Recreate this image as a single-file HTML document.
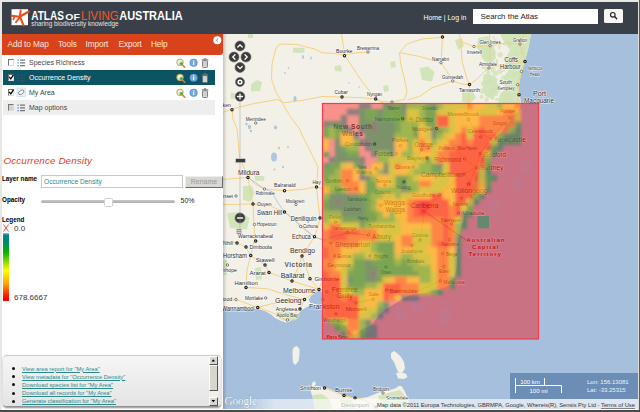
<!DOCTYPE html>
<html><head><meta charset="utf-8"><title>Atlas of Living Australia - Spatial Portal</title>
<style>
html,body{margin:0;padding:0;}
body{width:640px;height:412px;overflow:hidden;position:relative;background:#fff;font-family:"Liberation Sans",Arial,sans-serif;font-size:8px;color:#222;}
.abs{position:absolute;}
#hdr{left:2px;top:2px;width:636px;height:32px;background:#394049;}
#menu{left:2px;top:34px;width:221px;height:21px;background:#d9431b;border-radius:0 0 3px 0;}
#menu span{position:absolute;top:4.6px;color:#fbe4dc;font-size:8.3px;white-space:nowrap;letter-spacing:-0.12px}
.row{left:3px;width:212px;height:15px;}
.row .cb{position:absolute;left:4.5px;top:4px;width:4.8px;height:4.8px;border:1px solid #777;border-right-color:#ddd;border-bottom-color:#ddd;background:#fff;}
.row .tx{position:absolute;left:26px;top:3.5px;font-size:7px;color:#444;white-space:nowrap}
.lbl{font-weight:bold;font-size:6.3px;color:#000;white-space:nowrap}
a{color:#2b8a8c;text-decoration:underline}
#links div{position:absolute;left:22px;font-size:5.8px;white-space:nowrap;color:#2b8a8c;text-decoration:underline;text-decoration-thickness:.5px;text-underline-offset:.5px}
#links i{position:absolute;left:9.5px;width:3px;height:3px;border-radius:2px;background:#111}
</style></head><body>
<!-- outer frame -->
<div class="abs" style="left:0;top:0;width:640px;height:412px;background:#e9e7e1"></div>
<div class="abs" style="left:2px;top:2px;width:636px;height:408px;background:#fff"></div>
<div class="abs" style="left:638.5px;top:0;width:1.5px;height:412px;background:#5a5a5a;z-index:5"></div>
<div class="abs" style="left:637.5px;top:0;width:1px;height:412px;background:#e0ded8;z-index:5"></div>
<div class="abs" style="left:0;top:410px;width:640px;height:2px;background:#4a4a4a;z-index:5"></div>

<!-- MAP -->
<svg class="abs" style="left:223px;top:34px" width="415" height="375" viewBox="223 34 415 375" font-family="Liberation Sans, Arial, sans-serif">
<defs>
<filter id="bl" x="-5%" y="-5%" width="110%" height="110%"><feGaussianBlur stdDeviation="1.6"/></filter>
<clipPath id="ov"><rect x="322.5" y="103.5" width="216" height="235.5"/></clipPath>
<linearGradient id="cst" x1="236" x2="638" y1="0" y2="0" gradientUnits="userSpaceOnUse"><stop offset="0" stop-color="#fff" stop-opacity="0"/><stop offset=".1" stop-color="#fff" stop-opacity=".6"/><stop offset="1" stop-color="#fff" stop-opacity=".62"/></linearGradient><linearGradient id="lsh" x1="0" x2="1" y1="0" y2="0"><stop offset="0" stop-color="#000" stop-opacity=".18"/><stop offset="1" stop-color="#000" stop-opacity="0"/></linearGradient>
</defs>
<rect x="223" y="34" width="415" height="375" fill="#a5bfdd"/>
<!-- mainland -->
<path id="land" fill="#f3f0e8" d="M223,34 L531,34 L529.5,42 L528,50 L526,57 L525,62 L523,68 L521.5,73 L520,79 L519,85 L519,91 L520,96 L521,103 L520,108 L517,112 L512,116 L510,121 L506,126 L503,131 L497,136 L492,141 L488,147 L485,152 L482,158 L480,164 L478,170 L476,176 L474,182 L472,188 L471,194 L469,200 L467,206 L466,212 L464,218 L462,224 L460,230 L459,237 L458,244 L457.5,251 L457,258 L457,265 L456,271 L454,277 L451,283 L446,287 L440,289 L432,291 L424,293 L415,294 L408,296 L402,299 L396,303 L391,306 L386,309 L381,313 L377,318 L373,323 L368,327 L362,329 L357,333 L352,335 L349,331 L346,326 L342,322 L337,320 L331,319 L325,318 L322,315 L322,307 L318,306 L314,305 L310,303.5 L308,300 L311,296 L315,293 L319,291 L322,292 L322,303 L319,305 L314,305 L309,306 L305,308 L301,311 L297,315 L293,319 L289,322 L285,322.5 L280,320.5 L275,318 L271,314.5 L266,311.5 L260,309.5 L253,308.5 L245,308 L236,308 L229,307.5 L223,307.5 Z"/>
<!-- Port Phillip bay -->
<path fill="#a5bfdd" d="M319.5,290.5 L315,292.5 L311,296 L308.5,300 L310.5,303 L315,304 L319,305 L323,304 L324,299 L323,293 Z"/>
<!-- islands -->
<path fill="#f3f0e8" d="M294,347 L297,346 L299.5,349 L299.5,355 L298.5,361 L295.5,365 L293,363 L292.5,356 L292.5,350 Z"/>
<path fill="#f3f0e8" d="M391,353 L394,351 L397,353 L401,357 L404,362 L405,368 L403,372 L398,372 L396,367 L394,362 L391,358 Z"/>
<path fill="#f3f0e8" d="M396,373 L401,372 L406,374 L407.5,377 L404,379 L398,378.5 Z"/>
<path fill="#f3f0e8" d="M312,383 L314.5,381 L316,384 L314,386.5 L312,386 Z"/>
<!-- Tasmania -->
<path fill="#f3f0e8" d="M310.500,390 L313,386.5 L318,386 L325,387.5 L330,389 L335,391.500 L340,393.500 L345,396 L350,397.500 L356,398.500 L362,398 L368,397 L374,394.500 L379,392.500 L384,391 L390,390 L395,388.500 L399,386 L401.500,386 L404,390 L406,394 L408,399 L409,404 L409.500,409 L314.500,409 L314,404 L313,399 L311.500,394 Z"/>
<!-- forest patches -->
<g fill="#cfe3b6" opacity=".9">
<path d="M293,47.7 L304.5,47.7 L304.5,52.7 L293,52.7 Z"/>
<path d="M334.5,66 L341,65 L342,71.5 L335,71 Z"/>
<path d="M251,84 L257,80 L262,82 L260,91 L251,91.5 Z"/>
<path d="M248,34 L253,34 L253,38 L248,38 Z"/>
<path d="M230.7,92.7 L234.5,92.7 L234.5,99 L230.7,99 Z"/>
<path d="M419.5,68 L428,66.5 L434.5,72 L432,81.5 L422,80 Z"/>
<path d="M243,186 L252,185.7 L254.5,193 L250,202 L243,200 Z"/>
<path d="M227,213 L240,212 L249.5,218 L247,229.5 L230,228 Z"/>
<path d="M254.5,175.7 L264.5,176 L264,180.7 L255,180.7 Z"/>
<path d="M255,268 L261,267 L262,279 L256,280 Z"/>
<path d="M276,312 L288,311 L294.5,313 L300,315 L296,320 L286,321.5 L279,318.5 Z"/>
<path d="M222,260 L227,260 L227,275 L222,275 Z"/>
<path d="M312,395 L322,394 L330,400 L332,409 L315,409 Z"/>
<path d="M378,396 L392,392 L400,390 L406,397 L408,409 L385,409 L380,403 Z"/>
<path d="M340,399 L352,400 L356,409 L342,409 Z"/>
<path d="M500,34 L531,34 L528,50 L525,62 L521,74 L519,86 L519,95 L520,103 L498,103 L500,94 L506,88 L503,78 L509,70 L505,60 L510,50 L504,42 Z"/>
<path d="M478,38 L488,36 L494,46 L496,58 L489,66 L482,58 L477,48 Z"/>
<path d="M484,74 L495,76 L499,88 L493,100 L485,96 L482,84 Z"/>
<path d="M462,92 L472,90 L476,98 L470,103 L462,102 Z"/>
<path d="M455,40 L462,38 L464,46 L458,50 Z"/>
<path d="M390,62 L395,61 L396,67 L391,68 Z"/>
<path d="M383,86 L388,85 L389,91 L384,92 Z"/>
</g>
<g fill="#cfe3b6" opacity=".7"><ellipse cx="492.8" cy="44.4" rx="2.5" ry="1.4"/><ellipse cx="505.1" cy="59.2" rx="1.3" ry="2.4"/><ellipse cx="498.6" cy="91.1" rx="1.4" ry="1.7"/><ellipse cx="510.4" cy="99.4" rx="2.4" ry="2.1"/><ellipse cx="523.8" cy="54.0" rx="1.5" ry="1.5"/><ellipse cx="491.9" cy="90.3" rx="1.6" ry="2.5"/><ellipse cx="511.1" cy="59.7" rx="2.3" ry="1.3"/><ellipse cx="513.5" cy="63.5" rx="1.8" ry="2.5"/><ellipse cx="500.3" cy="54.7" rx="2.8" ry="2.8"/><ellipse cx="488.2" cy="73.6" rx="2.3" ry="3.2"/><ellipse cx="516.3" cy="53.9" rx="3.2" ry="1.5"/><ellipse cx="498.3" cy="86.2" rx="1.5" ry="2.3"/><ellipse cx="518.3" cy="73.5" rx="3.0" ry="1.9"/><ellipse cx="514.3" cy="75.0" rx="2.4" ry="2.2"/><ellipse cx="501.5" cy="79.8" rx="1.3" ry="2.8"/><ellipse cx="511.5" cy="102.5" rx="2.8" ry="1.9"/><ellipse cx="496.4" cy="80.1" rx="1.2" ry="2.3"/><ellipse cx="496.7" cy="94.1" rx="1.4" ry="2.2"/><ellipse cx="505.9" cy="95.0" rx="2.8" ry="3.2"/><ellipse cx="490.1" cy="62.7" rx="1.9" ry="3.2"/><ellipse cx="487.5" cy="67.5" rx="2.4" ry="1.8"/><ellipse cx="495.4" cy="73.1" rx="3.1" ry="2.8"/><ellipse cx="503.9" cy="76.6" rx="2.6" ry="1.3"/><ellipse cx="496.8" cy="61.5" rx="1.4" ry="2.7"/><ellipse cx="493.7" cy="37.6" rx="1.2" ry="1.5"/><ellipse cx="509.6" cy="44.2" rx="1.7" ry="2.0"/><ellipse cx="495.1" cy="42.5" rx="2.9" ry="3.5"/><ellipse cx="501.0" cy="67.4" rx="1.4" ry="1.4"/><ellipse cx="493.9" cy="52.3" rx="2.9" ry="1.6"/><ellipse cx="504.6" cy="44.1" rx="2.3" ry="1.3"/><ellipse cx="504.6" cy="101.5" rx="2.9" ry="2.8"/><ellipse cx="489.1" cy="59.3" rx="1.5" ry="3.0"/><ellipse cx="504.9" cy="87.8" rx="1.9" ry="1.7"/><ellipse cx="487.2" cy="69.7" rx="1.9" ry="1.3"/><ellipse cx="489.0" cy="81.8" rx="3.1" ry="2.2"/><ellipse cx="486.8" cy="49.7" rx="1.6" ry="1.7"/><ellipse cx="510.2" cy="96.1" rx="2.9" ry="2.3"/><ellipse cx="511.9" cy="89.2" rx="1.4" ry="2.7"/><ellipse cx="517.5" cy="67.0" rx="1.6" ry="3.0"/><ellipse cx="493.3" cy="89.3" rx="3.1" ry="2.1"/><ellipse cx="497.3" cy="99.3" rx="2.6" ry="1.6"/><ellipse cx="482.5" cy="91.0" rx="3.2" ry="2.7"/><ellipse cx="494.3" cy="71.9" rx="1.5" ry="1.2"/><ellipse cx="504.5" cy="98.4" rx="2.1" ry="3.2"/><ellipse cx="521.9" cy="48.6" rx="1.7" ry="1.9"/><ellipse cx="488.0" cy="74.5" rx="1.7" ry="2.2"/><ellipse cx="481.6" cy="96.8" rx="1.9" ry="2.3"/><ellipse cx="507.8" cy="96.4" rx="2.0" ry="3.3"/><ellipse cx="503.1" cy="70.7" rx="2.2" ry="1.2"/><ellipse cx="499.5" cy="46.6" rx="1.2" ry="3.0"/><ellipse cx="484.0" cy="66.7" rx="2.7" ry="2.5"/><ellipse cx="492.9" cy="69.8" rx="2.3" ry="3.0"/><ellipse cx="488.4" cy="53.1" rx="2.7" ry="2.4"/><ellipse cx="506.6" cy="86.4" rx="3.0" ry="2.2"/><ellipse cx="509.5" cy="68.9" rx="2.2" ry="2.8"/><ellipse cx="500.2" cy="70.8" rx="2.2" ry="3.4"/><ellipse cx="514.6" cy="94.5" rx="3.1" ry="1.8"/><ellipse cx="506.5" cy="99.1" rx="2.9" ry="1.5"/><ellipse cx="483.0" cy="83.4" rx="2.5" ry="1.5"/><ellipse cx="486.7" cy="99.7" rx="2.0" ry="2.3"/><ellipse cx="483.4" cy="63.8" rx="2.2" ry="2.0"/><ellipse cx="485.4" cy="56.0" rx="2.6" ry="1.2"/><ellipse cx="506.1" cy="64.4" rx="1.2" ry="2.0"/><ellipse cx="510.2" cy="69.3" rx="1.3" ry="3.5"/><ellipse cx="519.7" cy="101.0" rx="1.4" ry="1.8"/><ellipse cx="489.7" cy="42.9" rx="2.0" ry="3.3"/><ellipse cx="521.5" cy="51.8" rx="1.5" ry="3.3"/><ellipse cx="507.1" cy="82.3" rx="1.4" ry="1.3"/><ellipse cx="513.9" cy="63.3" rx="1.3" ry="3.4"/><ellipse cx="510.8" cy="89.3" rx="1.4" ry="3.2"/></g>
<g fill="#a5bfdd" opacity=".85">
<ellipse cx="295" cy="99" rx="1.6" ry="3"/>
<ellipse cx="246.5" cy="124" rx="1.2" ry="1.5"/>
<ellipse cx="249.5" cy="127" rx="1.6" ry="2.2"/>
<ellipse cx="251" cy="131" rx="1.2" ry="1.2"/>
<ellipse cx="275.5" cy="127.5" rx="1.6" ry="2"/>
<ellipse cx="274" cy="157" rx="3" ry="4.5"/>
<ellipse cx="279" cy="148" rx="1" ry="1.2"/>
<ellipse cx="288" cy="147" rx="1" ry="1"/>
<ellipse cx="283" cy="167" rx="1" ry="1.2"/>
<ellipse cx="274.5" cy="169.5" rx="1" ry="1"/>
<ellipse cx="303" cy="57" rx="1" ry="2"/>
<ellipse cx="311" cy="58" rx="0.8" ry="1.5"/>
<ellipse cx="288.5" cy="68" rx="0.8" ry="1"/>
<ellipse cx="285" cy="73" rx="0.8" ry="1"/>
<ellipse cx="349" cy="83" rx="0.8" ry="0.8"/>
<ellipse cx="359" cy="87" rx="0.8" ry="0.8"/>
</g>
<!-- roads -->
<g fill="none" stroke="#f5cf7c" stroke-width="1" stroke-linejoin="round" opacity=".95">
<path d="M222,112.7 L232,109 L252,104 L277,99.5 L284.5,102.7 L304.5,100 L322,96.5 L342,97 L362,97.7 L375.7,99 L392,108 L402.7,118.7 L411,118.7"/>
<path d="M278,45 L275.7,49 L272,64 L271.5,79 L275.7,91.5 L280.7,100 L285.7,109 L292,119 L299.5,129 L303,137 L309.5,149.5 L318,167 L316.5,187"/>
<path d="M278,45 L282,44 L297,44.5 L314.5,49 L322,52.7 L334.5,53.5 L344.5,55.2"/>
<path d="M344.5,55 L352,66.5 L362,81.5 L372,94 L375.7,99"/>
<path d="M344.5,55 L343,44 L341.5,34"/>
<path d="M344.5,55 L357,52.7 L368,52"/>
<path d="M232,109 L233,119 L237,129 L238,140 L239.5,157 L248,177.5"/>
<path d="M399.5,52.7 L407,44 L422,39 L442.5,37.2"/>
<path d="M442,34 L442.5,37.2 L441,62.7"/>
<path d="M441,62.7 L447,71.5 L452.7,81 L462,84 L469.5,84.5"/>
<path d="M469.5,84.5 L477,79 L484.5,71.5 L489,68 L490,56.5 L490,45.7 L489.5,34"/>
<path d="M490,45.7 L474,46.5 L460.7,41.5 L459.5,34"/>
<path d="M460.7,41.5 L462,61.5 L467,79 L469.5,84.5"/>
<path d="M399.5,52.7 L419.5,56.5 L441,62.7"/>
<path d="M399.5,52.7 L400.7,64 L404.5,79 L407,91.5 L404.5,99.5 L392,102 L382,101.5 L375.7,99"/>
<path d="M452.7,81 L432,87.7 L419.5,96.5 L407,100"/>
<path d="M469.5,84.5 L468.4,104 L468.4,119.4 L475,130 L491,139"/>
<path d="M524,34 L520,44 L525,61.5 L521.5,71.5 L517.7,84.7 L519,94.7 L515,108 L509.7,117.7 L498,130 L491,139 L480,153.7 L476.5,167.7 L468.4,184 L461.4,198 L458.6,213 L451.5,224 L449.6,239.7 L442.6,253.7 L443.8,266.4 L440.3,281 L420,290 L386.6,290 L373,299.4 L356.2,302.8 L336,296 L319,289.5"/>
<path d="M490,45.7 L507,42.7 L520,44"/>
<path d="M489,68 L507,64 L525,61.5"/>
<path d="M222,179.5 L248,177.5"/>
<path d="M248,177.5 L255.7,184.5 L264.5,189 L284.5,190.7 L302,189.5 L316.5,187 L335,192 L356,188.7 L366,199 L380.7,205.4 L400,200 L424.4,211.4"/>
<path d="M248,177.5 L249.5,187 L253,204 L254,224.5 L254.5,240 L250.7,255.5"/>
<path d="M253,204 L269.5,205.7 L284.5,212 L297,222 L314.5,237"/>
<path d="M316.5,187 L318,202 L320,218 L317,229.5 L314.5,237 L330.7,243 L334.5,256 L327,265 L319,289.5"/>
<path d="M222,204.5 L253,204"/>
<path d="M222,241 L237,243 L246,247 L250.7,255.5 L265,265 L269,272.5 L292,281 L319,289.5"/>
<path d="M314.5,236.7 L302,256 L310,278.7 L319,289.5"/>
<path d="M246,287.5 L267,288.7 L287,295 L304.5,299.5"/>
<path d="M222,301 L236,299.5 L257.7,307.5 L272,303.7 L289.5,300 L304.5,299.5 L312,294 L319,289.5"/>
<path d="M250.7,255.5 L247,270 L246,287.5"/>
<path d="M257.7,307.5 L272,312.5 L287.5,320 L300,309 L304.5,299.5"/>
<path d="M292,281 L298,268 L302,256"/>
<path d="M411,118.7 L421.6,150 L413,167 L404,181.7 L380.7,205.4 L368.5,235 L347.5,232.4 L330.7,243"/>
<path d="M411,118.7 L436.6,128.5 L454,147 L464.6,159 L476.5,167.7"/>
<path d="M476.5,167.7 L464,174 L439.4,194.6 L424.4,211.4 L420,240 L412,245.5"/>
<path d="M324.5,388 L344,395.5 L355,398 L365,400 L376,407"/>
</g>
<path fill="none" stroke="#9db8d8" stroke-width=".7" d="M248,177.5 L256,183 L264.5,189 L272,192 L278,203 L284.5,212 L292,218 L300.7,226.500 L308,232 L314.500,237 L324,240 L335,236 L347,233 L368,235"/>
<path d="M424.4,211.4 L466,240" stroke="#8a1c1c" stroke-width=".5" fill="none"/>
<g font-family="Liberation Sans, Arial, sans-serif" fill="#2a2a2a" stroke="#fff" stroke-width="1.1" stroke-opacity=".85" paint-order="stroke" stroke-linejoin="round">
<text x="336.0" y="53.2" font-size="6.0" textLength="16.5" lengthAdjust="spacingAndGlyphs">Bourke</text>
<text x="357.0" y="49.9" font-size="5.3" textLength="22.0" lengthAdjust="spacingAndGlyphs">Brewarrina</text>
<text x="334.5" y="94.2" font-size="6.0" textLength="13.5" lengthAdjust="spacingAndGlyphs">Cobar</text>
<text x="367.0" y="96.2" font-size="6.0" textLength="15.0" lengthAdjust="spacingAndGlyphs">Nyngan</text>
<text x="245.7" y="120.9" font-size="5.3" textLength="20.0" lengthAdjust="spacingAndGlyphs">Menindee</text>
<text x="479.5" y="43.9" font-size="5.3" textLength="21.2" lengthAdjust="spacingAndGlyphs">Glen Innes</text>
<text x="513.0" y="41.9" font-size="5.3" textLength="14.0" lengthAdjust="spacingAndGlyphs">Grafton</text>
<text x="467.0" y="53.9" font-size="5.3" textLength="15.0" lengthAdjust="spacingAndGlyphs">Inverell</text>
<text x="432.0" y="60.9" font-size="5.3" textLength="17.0" lengthAdjust="spacingAndGlyphs">Narrabri</text>
<text x="479.0" y="66.4" font-size="5.3" textLength="18.0" lengthAdjust="spacingAndGlyphs">Armidale</text>
<text x="504.5" y="62.0" font-size="7.0" textLength="13.5" lengthAdjust="spacingAndGlyphs">Coffs</text>
<text x="500.0" y="68.5" font-size="7.0" textLength="20.7" lengthAdjust="spacingAndGlyphs">Harbour</text>
<text x="527.5" y="69.9" font-size="5.3" textLength="14.5" lengthAdjust="spacingAndGlyphs">Nambucca</text>
<text x="530.0" y="75.9" font-size="5.3" textLength="10.0" lengthAdjust="spacingAndGlyphs">Heads</text>
<text x="442.0" y="79.4" font-size="5.3" textLength="21.0" lengthAdjust="spacingAndGlyphs">Gunnedah</text>
<text x="459.0" y="92.2" font-size="6.0" textLength="21.0" lengthAdjust="spacingAndGlyphs">Tamworth</text>
<text x="499.5" y="84.4" font-size="5.3" textLength="12.5" lengthAdjust="spacingAndGlyphs">South</text>
<text x="497.5" y="89.9" font-size="5.3" textLength="17.0" lengthAdjust="spacingAndGlyphs">Kempsey</text>
<text x="533.0" y="95.5" font-size="7.0" textLength="13.0" lengthAdjust="spacingAndGlyphs">Port</text>
<text x="524.0" y="103.0" font-size="7.0" textLength="30.0" lengthAdjust="spacingAndGlyphs">Macquarie</text>
<text x="388.0" y="109.9" font-size="5.3" textLength="11.5" lengthAdjust="spacingAndGlyphs">Warren</text>
<text x="238.0" y="174.5" font-size="7.0" textLength="21.5" lengthAdjust="spacingAndGlyphs">Mildura</text>
<text x="274.0" y="186.9" font-size="5.3" textLength="21.7" lengthAdjust="spacingAndGlyphs">Balranald</text>
<text x="312.5" y="184.2" font-size="6.0" textLength="8.2" lengthAdjust="spacingAndGlyphs">Hay</text>
<text x="255.7" y="194.9" font-size="5.3" textLength="18.8" lengthAdjust="spacingAndGlyphs">Robinvale</text>
<text x="257.0" y="206.2" font-size="6.0" textLength="14.5" lengthAdjust="spacingAndGlyphs">Ouyen</text>
<text x="285.7" y="202.6" font-size="5.3" textLength="18.8" lengthAdjust="spacingAndGlyphs">Moulamein</text>
<text x="257.0" y="214.5" font-size="7.0" textLength="25.0" lengthAdjust="spacingAndGlyphs">Swan Hill</text>
<text x="290.7" y="220.5" font-size="7.0" textLength="25.8" lengthAdjust="spacingAndGlyphs">Deniliquin</text>
<text x="257.0" y="226.4" font-size="5.3" textLength="19.5" lengthAdjust="spacingAndGlyphs">Hopetoun</text>
<text x="303.0" y="228.4" font-size="5.3" textLength="15.0" lengthAdjust="spacingAndGlyphs">Cohuna</text>
<text x="292.0" y="239.2" font-size="7.0" textLength="18.7" lengthAdjust="spacingAndGlyphs">Echuca</text>
<text x="238.0" y="237.9" font-size="5.3" textLength="35.0" lengthAdjust="spacingAndGlyphs">Warracknabeal</text>
<text x="223.0" y="244.9" font-size="5.3" textLength="10.0" lengthAdjust="spacingAndGlyphs">Nhill</text>
<text x="249.5" y="248.9" font-size="5.3" textLength="22.5" lengthAdjust="spacingAndGlyphs">Dimboola</text>
<text x="223.0" y="258.0" font-size="7.0" textLength="24.0" lengthAdjust="spacingAndGlyphs">Horsham</text>
<text x="290.0" y="253.2" font-size="7.0" textLength="25.0" lengthAdjust="spacingAndGlyphs">Bendigo</text>
<text x="255.7" y="262.2" font-size="6.0" textLength="18.8" lengthAdjust="spacingAndGlyphs">Stawell</text>
<text x="249.5" y="274.7" font-size="6.0" textLength="16.2" lengthAdjust="spacingAndGlyphs">Ararat</text>
<text x="280.7" y="278.2" font-size="7.0" textLength="23.8" lengthAdjust="spacingAndGlyphs">Ballarat</text>
<text x="314.5" y="281.2" font-size="6.0" textLength="25.0" lengthAdjust="spacingAndGlyphs">Gisborne</text>
<text x="234.5" y="284.7" font-size="6.0" textLength="23.2" lengthAdjust="spacingAndGlyphs">Hamilton</text>
<text x="283.0" y="293.0" font-size="7.0" textLength="32.7" lengthAdjust="spacingAndGlyphs">Melbourne</text>
<text x="245.0" y="299.9" font-size="5.3" textLength="18.0" lengthAdjust="spacingAndGlyphs">Mortlake</text>
<text x="275.0" y="302.5" font-size="7.0" textLength="26.5" lengthAdjust="spacingAndGlyphs">Geelong</text>
<text x="309.0" y="308.5" font-size="7.0" textLength="30.5" lengthAdjust="spacingAndGlyphs">Frankston</text>
<text x="222.0" y="310.5" font-size="7.0" textLength="32.5" lengthAdjust="spacingAndGlyphs">Warrnambool</text>
<text x="275.7" y="310.9" font-size="5.3" textLength="21.3" lengthAdjust="spacingAndGlyphs">Anglesea</text>
<text x="276.5" y="317.4" font-size="5.3" textLength="21.5" lengthAdjust="spacingAndGlyphs">Apollo Bay</text>
<text x="300.0" y="389.9" font-size="5.3" textLength="21.0" lengthAdjust="spacingAndGlyphs">Smithton</text>
<text x="335.0" y="391.7" font-size="6.0" textLength="17.5" lengthAdjust="spacingAndGlyphs">Burnie</text>
<text x="341.0" y="407.2" font-size="6.0" textLength="28.0" lengthAdjust="spacingAndGlyphs">Devonport</text>
<text x="373.0" y="390.9" font-size="5.3" textLength="16.0" lengthAdjust="spacingAndGlyphs">Bridport</text>
<text x="386.0" y="399.9" font-size="5.3" textLength="22.0" lengthAdjust="spacingAndGlyphs">Scottsdale</text>
<text x="217.0" y="197.9" font-size="5.3" textLength="16.0" lengthAdjust="spacingAndGlyphs">Sunset</text>
<text x="214.5" y="106.9" font-size="5.3" textLength="16.5" lengthAdjust="spacingAndGlyphs">Broken</text>
<text x="211.0" y="301.4" font-size="5.3" textLength="21.0" lengthAdjust="spacingAndGlyphs">Heywood</text>
<text x="213.0" y="271.9" font-size="5.3" textLength="24.0" lengthAdjust="spacingAndGlyphs">Edenhope</text>
<text x="374.7" y="120.6" font-size="5.3" textLength="25.3" lengthAdjust="spacingAndGlyphs">Narromine</text>
<text x="415.7" y="121.9" font-size="7.0" textLength="17.3" lengthAdjust="spacingAndGlyphs">Dubbo</text>
<text x="422.6" y="109.9" font-size="5.3" textLength="15.8" lengthAdjust="spacingAndGlyphs">Dunedoo</text>
<text x="447.4" y="115.7" font-size="6.0" textLength="31.6" lengthAdjust="spacingAndGlyphs">Muswellbrook</text>
<text x="412.0" y="131.2" font-size="6.0" textLength="21.0" lengthAdjust="spacingAndGlyphs">Mudgee</text>
<text x="392.0" y="141.9" font-size="6.0" textLength="16.7" lengthAdjust="spacingAndGlyphs">Parkes</text>
<text x="344.7" y="145.9" font-size="5.3" textLength="27.3" lengthAdjust="spacingAndGlyphs">Condobolin</text>
<text x="414.6" y="146.5" font-size="7.0" textLength="18.4" lengthAdjust="spacingAndGlyphs">Orange</text>
<text x="374.7" y="156.2" font-size="7.0" textLength="18.3" lengthAdjust="spacingAndGlyphs">Forbes</text>
<text x="438.4" y="149.7" font-size="5.3" textLength="15.6" lengthAdjust="spacingAndGlyphs">Portland</text>
<text x="407.0" y="159.9" font-size="5.3" textLength="17.4" lengthAdjust="spacingAndGlyphs">Blayney</text>
<text x="434.0" y="161.5" font-size="7.0" textLength="27.0" lengthAdjust="spacingAndGlyphs">Richmond</text>
<text x="394.7" y="169.2" font-size="6.0" textLength="15.7" lengthAdjust="spacingAndGlyphs">Cowra</text>
<text x="358.0" y="168.9" font-size="5.3" textLength="8.7" lengthAdjust="spacingAndGlyphs">West</text>
<text x="356.0" y="173.9" font-size="5.3" textLength="16.0" lengthAdjust="spacingAndGlyphs">Wyalong</text>
<text x="421.0" y="176.5" font-size="7.0" textLength="42.0" lengthAdjust="spacingAndGlyphs">Campbelltown</text>
<text x="325.8" y="182.8" font-size="6.0" textLength="16.2" lengthAdjust="spacingAndGlyphs">Griffith</text>
<text x="375.4" y="182.5" font-size="5.3" textLength="15.6" lengthAdjust="spacingAndGlyphs">Temora</text>
<text x="395.7" y="189.2" font-size="6.0" textLength="14.7" lengthAdjust="spacingAndGlyphs">Young</text>
<text x="335.0" y="190.9" font-size="6.0" textLength="16.0" lengthAdjust="spacingAndGlyphs">Leeton</text>
<text x="375.0" y="193.9" font-size="5.3" textLength="16.0" lengthAdjust="spacingAndGlyphs">Coolamon</text>
<text x="412.0" y="196.8" font-size="6.0" textLength="23.0" lengthAdjust="spacingAndGlyphs">Goulburn</text>
<text x="347.5" y="200.9" font-size="5.3" textLength="19.2" lengthAdjust="spacingAndGlyphs">Narrandera</text>
<text x="384.0" y="204.5" font-size="7.0" textLength="21.0" lengthAdjust="spacingAndGlyphs">Wagga</text>
<text x="385.5" y="211.5" font-size="7.0" textLength="19.5" lengthAdjust="spacingAndGlyphs">Wagga</text>
<text x="410.4" y="207.5" font-size="7.0" textLength="28.0" lengthAdjust="spacingAndGlyphs">Canberra</text>
<text x="344.0" y="210.5" font-size="5.3" textLength="16.7" lengthAdjust="spacingAndGlyphs">Lockhart</text>
<text x="329.0" y="218.9" font-size="5.3" textLength="12.4" lengthAdjust="spacingAndGlyphs">Finley</text>
<text x="358.0" y="219.6" font-size="5.3" textLength="10.5" lengthAdjust="spacingAndGlyphs">Henty</text>
<text x="368.5" y="227.9" font-size="5.3" textLength="26.2" lengthAdjust="spacingAndGlyphs">Tumbarumba</text>
<text x="331.7" y="229.9" font-size="5.3" textLength="24.3" lengthAdjust="spacingAndGlyphs">Yarrawonga</text>
<text x="372.0" y="238.5" font-size="7.0" textLength="19.0" lengthAdjust="spacingAndGlyphs">Albury</text>
<text x="412.0" y="237.2" font-size="6.0" textLength="16.0" lengthAdjust="spacingAndGlyphs">Cooma</text>
<text x="335.0" y="247.1" font-size="7.0" textLength="35.0" lengthAdjust="spacingAndGlyphs">Shepparton</text>
<text x="440.8" y="221.9" font-size="5.3" textLength="20.4" lengthAdjust="spacingAndGlyphs">Batehaven</text>
<text x="500.0" y="112.9" font-size="6.0" textLength="15.6" lengthAdjust="spacingAndGlyphs">Forster</text>
<text x="493.0" y="124.9" font-size="5.3" textLength="14.0" lengthAdjust="spacingAndGlyphs">Dungog</text>
<text x="467.7" y="133.2" font-size="6.0" textLength="25.3" lengthAdjust="spacingAndGlyphs">Cessnock</text>
<text x="494.7" y="141.5" font-size="7.0" textLength="31.3" lengthAdjust="spacingAndGlyphs">Newcastle</text>
<text x="458.0" y="149.7" font-size="5.3" textLength="19.0" lengthAdjust="spacingAndGlyphs">Blue Haven</text>
<text x="484.0" y="156.9" font-size="7.0" textLength="22.0" lengthAdjust="spacingAndGlyphs">Gosford</text>
<text x="480.7" y="170.2" font-size="7.0" textLength="22.7" lengthAdjust="spacingAndGlyphs">Sydney</text>
<text x="451.0" y="192.9" font-size="7.0" textLength="36.7" lengthAdjust="spacingAndGlyphs">Wollongong</text>
<text x="452.7" y="205.9" font-size="6.0" textLength="15.7" lengthAdjust="spacingAndGlyphs">Nowra</text>
<text x="463.0" y="215.2" font-size="6.0" textLength="21.0" lengthAdjust="spacingAndGlyphs">Ulladulla</text>
<text x="441.5" y="246.2" font-size="5.3" textLength="17.5" lengthAdjust="spacingAndGlyphs">Narooma</text>
<text x="446.0" y="255.9" font-size="6.0" textLength="11.7" lengthAdjust="spacingAndGlyphs">Bega</text>
<text x="439.0" y="273.2" font-size="6.0" textLength="10.6" lengthAdjust="spacingAndGlyphs">Eden</text>
<text x="443.8" y="283.5" font-size="5.3" textLength="20.9" lengthAdjust="spacingAndGlyphs">Mallacoota</text>
<text x="400.6" y="253.3" font-size="5.3" textLength="22.0" lengthAdjust="spacingAndGlyphs">Jindabyne</text>
<text x="407.0" y="262.9" font-size="5.3" textLength="17.4" lengthAdjust="spacingAndGlyphs">Bombala</text>
<text x="337.7" y="258.2" font-size="6.0" textLength="13.3" lengthAdjust="spacingAndGlyphs">Euroa</text>
<text x="373.7" y="258.2" font-size="6.0" textLength="14.0" lengthAdjust="spacingAndGlyphs">Bright</text>
<text x="327.0" y="266.9" font-size="6.0" textLength="24.0" lengthAdjust="spacingAndGlyphs">Seymour</text>
<text x="380.7" y="274.3" font-size="5.3" textLength="10.3" lengthAdjust="spacingAndGlyphs">Omeo</text>
<text x="331.7" y="291.5" font-size="7.0" textLength="26.3" lengthAdjust="spacingAndGlyphs">Ferntree</text>
<text x="337.0" y="297.5" font-size="7.0" textLength="15.7" lengthAdjust="spacingAndGlyphs">Gully</text>
<text x="368.5" y="295.6" font-size="6.0" textLength="10.5" lengthAdjust="spacingAndGlyphs">Sale</text>
<text x="389.4" y="292.8" font-size="6.0" textLength="28.6" lengthAdjust="spacingAndGlyphs">Bairnsdale</text>
<text x="345.7" y="310.6" font-size="6.0" textLength="21.0" lengthAdjust="spacingAndGlyphs">Morwell</text>
<text x="323.0" y="321.8" font-size="6.0" textLength="22.7" lengthAdjust="spacingAndGlyphs">Wonthaggi</text>
</g>
<g font-family="Liberation Sans, Arial, sans-serif" font-weight="bold" stroke="#fff" stroke-width=".8" stroke-opacity=".6" paint-order="stroke">
<text x="284.5" y="266.9" font-size="6.6" fill="#555" textLength="27.5" lengthAdjust="spacing">Victoria</text>
<text x="333.5" y="129.2" font-size="6.6" fill="#444" textLength="38.5" lengthAdjust="spacing">New South</text>
<text x="342.0" y="136.2" font-size="6.6" fill="#444" textLength="21.0" lengthAdjust="spacing">Wales</text>
<text x="466.3" y="242.2" font-size="6.2" fill="#8a1c1c" textLength="38.2" lengthAdjust="spacing">Australian</text>
<text x="472.0" y="249.2" font-size="6.2" fill="#8a1c1c" textLength="26.4" lengthAdjust="spacing">Capital</text>
<text x="468.6" y="256.2" font-size="6.2" fill="#8a1c1c" textLength="32.4" lengthAdjust="spacing">Territory</text>
<text x="326.5" y="338.8" font-size="5" fill="#7a1030" textLength="22.5" lengthAdjust="spacing">Bass Strait</text>
</g>
<circle cx="344.5" cy="55.7" r="1.7" fill="#1a1a1a"/><circle cx="344.5" cy="55.7" r=".6" fill="#fff"/>
<circle cx="368" cy="52" r="1.2" fill="#fff" stroke="#333" stroke-width=".6"/>
<circle cx="342" cy="97" r="1.7" fill="#1a1a1a"/><circle cx="342" cy="97" r=".6" fill="#fff"/>
<circle cx="375.7" cy="99" r="1.7" fill="#1a1a1a"/><circle cx="375.7" cy="99" r=".6" fill="#fff"/>
<circle cx="255.7" cy="123" r="1.2" fill="#fff" stroke="#333" stroke-width=".6"/>
<circle cx="232" cy="109.7" r="1.7" fill="#1a1a1a"/><circle cx="232" cy="109.7" r=".6" fill="#fff"/>
<circle cx="490" cy="45.7" r="1.2" fill="#fff" stroke="#333" stroke-width=".6"/>
<circle cx="520" cy="44" r="1.2" fill="#fff" stroke="#333" stroke-width=".6"/>
<circle cx="474" cy="46.5" r="1.2" fill="#fff" stroke="#333" stroke-width=".6"/>
<circle cx="441" cy="62.7" r="1.2" fill="#fff" stroke="#333" stroke-width=".6"/>
<circle cx="489" cy="68" r="1.2" fill="#fff" stroke="#333" stroke-width=".6"/>
<circle cx="525" cy="61.5" r="1.7" fill="#1a1a1a"/><circle cx="525" cy="61.5" r=".6" fill="#fff"/>
<circle cx="521.5" cy="71.5" r="1.2" fill="#fff" stroke="#333" stroke-width=".6"/>
<circle cx="452.7" cy="81" r="1.2" fill="#fff" stroke="#333" stroke-width=".6"/>
<circle cx="469.5" cy="84.5" r="1.7" fill="#1a1a1a"/><circle cx="469.5" cy="84.5" r=".6" fill="#fff"/>
<circle cx="517.7" cy="84.7" r="1.2" fill="#fff" stroke="#333" stroke-width=".6"/>
<circle cx="519" cy="94.7" r="1.7" fill="#1a1a1a"/><circle cx="519" cy="94.7" r=".6" fill="#fff"/>
<circle cx="442.5" cy="37" r="1.7" fill="#1a1a1a"/><circle cx="442.5" cy="37" r=".6" fill="#fff"/>
<circle cx="392" cy="102" r="1.2" fill="#fff" stroke="#333" stroke-width=".6"/>
<circle cx="248" cy="177.5" r="1.7" fill="#1a1a1a"/><circle cx="248" cy="177.5" r=".6" fill="#fff"/>
<circle cx="284.5" cy="190.7" r="1.7" fill="#1a1a1a"/><circle cx="284.5" cy="190.7" r=".6" fill="#fff"/>
<circle cx="316.5" cy="187" r="1.7" fill="#1a1a1a"/><circle cx="316.5" cy="187" r=".6" fill="#fff"/>
<circle cx="264.5" cy="189" r="1.2" fill="#fff" stroke="#333" stroke-width=".6"/>
<circle cx="236" cy="196" r="1.2" fill="#fff" stroke="#333" stroke-width=".6"/>
<circle cx="253" cy="204" r="1.7" fill="#1a1a1a"/><circle cx="253" cy="204" r=".6" fill="#fff"/>
<circle cx="296" cy="204.5" r="1.2" fill="#fff" stroke="#333" stroke-width=".6"/>
<circle cx="284.5" cy="212" r="1.7" fill="#1a1a1a"/><circle cx="284.5" cy="212" r=".6" fill="#fff"/>
<circle cx="320" cy="218" r="1.7" fill="#1a1a1a"/><circle cx="320" cy="218" r=".6" fill="#fff"/>
<circle cx="254.5" cy="224.5" r="1.2" fill="#fff" stroke="#333" stroke-width=".6"/>
<circle cx="300.7" cy="226.5" r="1.2" fill="#fff" stroke="#333" stroke-width=".6"/>
<circle cx="314.5" cy="236.7" r="1.7" fill="#1a1a1a"/><circle cx="314.5" cy="236.7" r=".6" fill="#fff"/>
<circle cx="255.7" cy="241" r="1.7" fill="#1a1a1a"/><circle cx="255.7" cy="241" r=".6" fill="#fff"/>
<circle cx="237" cy="243" r="1.7" fill="#1a1a1a"/><circle cx="237" cy="243" r=".6" fill="#fff"/>
<circle cx="246" cy="247" r="1.7" fill="#1a1a1a"/><circle cx="246" cy="247" r=".6" fill="#fff"/>
<circle cx="250.7" cy="255.5" r="1.7" fill="#1a1a1a"/><circle cx="250.7" cy="255.5" r=".6" fill="#fff"/>
<circle cx="302" cy="256" r="1.7" fill="#1a1a1a"/><circle cx="302" cy="256" r=".6" fill="#fff"/>
<circle cx="265" cy="265" r="1.7" fill="#1a1a1a"/><circle cx="265" cy="265" r=".6" fill="#fff"/>
<circle cx="269" cy="272.5" r="1.7" fill="#1a1a1a"/><circle cx="269" cy="272.5" r=".6" fill="#fff"/>
<circle cx="292" cy="281" r="1.7" fill="#1a1a1a"/><circle cx="292" cy="281" r=".6" fill="#fff"/>
<circle cx="310" cy="278.7" r="1.7" fill="#1a1a1a"/><circle cx="310" cy="278.7" r=".6" fill="#fff"/>
<circle cx="246" cy="287.5" r="1.7" fill="#1a1a1a"/><circle cx="246" cy="287.5" r=".6" fill="#fff"/>
<circle cx="319" cy="289.5" r="1.7" fill="#1a1a1a"/><circle cx="319" cy="289.5" r=".6" fill="#fff"/>
<circle cx="265.7" cy="298" r="1.2" fill="#fff" stroke="#333" stroke-width=".6"/>
<circle cx="304.5" cy="299.5" r="1.7" fill="#1a1a1a"/><circle cx="304.5" cy="299.5" r=".6" fill="#fff"/>
<circle cx="323" cy="299.5" r="1.2" fill="#fff" stroke="#333" stroke-width=".6"/>
<circle cx="257.7" cy="307.5" r="1.7" fill="#1a1a1a"/><circle cx="257.7" cy="307.5" r=".6" fill="#fff"/>
<circle cx="300" cy="309" r="1.7" fill="#1a1a1a"/><circle cx="300" cy="309" r=".6" fill="#fff"/>
<circle cx="287.5" cy="320" r="1.2" fill="#fff" stroke="#333" stroke-width=".6"/>
<circle cx="236" cy="299.5" r="1.2" fill="#fff" stroke="#333" stroke-width=".6"/>
<circle cx="227.5" cy="265" r="1.2" fill="#fff" stroke="#333" stroke-width=".6"/>
<circle cx="324.5" cy="388" r="1.7" fill="#1a1a1a"/><circle cx="324.5" cy="388" r=".6" fill="#fff"/>
<circle cx="344" cy="395.5" r="1.7" fill="#1a1a1a"/><circle cx="344" cy="395.5" r=".6" fill="#fff"/>
<circle cx="355" cy="398" r="1.7" fill="#1a1a1a"/><circle cx="355" cy="398" r=".6" fill="#fff"/>
<circle cx="383" cy="393" r="1.2" fill="#fff" stroke="#333" stroke-width=".6"/>
<circle cx="376" cy="407" r="1.2" fill="#fff" stroke="#333" stroke-width=".6"/>
<circle cx="402.7" cy="118.7" r="1.7" fill="#1a1a1a"/><circle cx="402.7" cy="118.7" r=".6" fill="#fff"/>
<circle cx="411" cy="118.7" r="1.2" fill="#fff" stroke="#333" stroke-width=".6"/>
<circle cx="468.4" cy="119.4" r="1.2" fill="#fff" stroke="#333" stroke-width=".6"/>
<circle cx="436.6" cy="128.5" r="1.7" fill="#1a1a1a"/><circle cx="436.6" cy="128.5" r=".6" fill="#fff"/>
<circle cx="400.6" cy="145.7" r="1.2" fill="#fff" stroke="#333" stroke-width=".6"/>
<circle cx="374.7" cy="144" r="1.7" fill="#1a1a1a"/><circle cx="374.7" cy="144" r=".6" fill="#fff"/>
<circle cx="421.6" cy="150" r="1.2" fill="#fff" stroke="#333" stroke-width=".6"/>
<circle cx="396.4" cy="153.7" r="1.2" fill="#fff" stroke="#333" stroke-width=".6"/>
<circle cx="427" cy="158" r="1.7" fill="#1a1a1a"/><circle cx="427" cy="158" r=".6" fill="#fff"/>
<circle cx="464.6" cy="159" r="1.2" fill="#fff" stroke="#333" stroke-width=".6"/>
<circle cx="413" cy="167" r="1.2" fill="#fff" stroke="#333" stroke-width=".6"/>
<circle cx="376" cy="168.7" r="1.2" fill="#fff" stroke="#333" stroke-width=".6"/>
<circle cx="464" cy="174" r="1.2" fill="#fff" stroke="#333" stroke-width=".6"/>
<circle cx="347.5" cy="180.6" r="1.2" fill="#fff" stroke="#333" stroke-width=".6"/>
<circle cx="385" cy="185" r="1.2" fill="#fff" stroke="#333" stroke-width=".6"/>
<circle cx="404" cy="181.7" r="1.7" fill="#1a1a1a"/><circle cx="404" cy="181.7" r=".6" fill="#fff"/>
<circle cx="356" cy="188.7" r="1.2" fill="#fff" stroke="#333" stroke-width=".6"/>
<circle cx="439.4" cy="194.6" r="1.2" fill="#fff" stroke="#333" stroke-width=".6"/>
<circle cx="380.7" cy="205.4" r="1.2" fill="#fff" stroke="#333" stroke-width=".6"/>
<circle cx="424.4" cy="211.4" r="1.2" fill="#fff" stroke="#333" stroke-width=".6"/>
<circle cx="335.6" cy="221.9" r="1.2" fill="#fff" stroke="#333" stroke-width=".6"/>
<circle cx="347.5" cy="232.4" r="1.2" fill="#fff" stroke="#333" stroke-width=".6"/>
<circle cx="368.5" cy="235" r="1.2" fill="#fff" stroke="#333" stroke-width=".6"/>
<circle cx="330.7" cy="243" r="1.2" fill="#fff" stroke="#333" stroke-width=".6"/>
<circle cx="509.7" cy="117.7" r="1.2" fill="#fff" stroke="#333" stroke-width=".6"/>
<circle cx="480.7" cy="137" r="1.2" fill="#fff" stroke="#333" stroke-width=".6"/>
<circle cx="491" cy="139" r="1.2" fill="#fff" stroke="#333" stroke-width=".6"/>
<circle cx="480" cy="153.7" r="1.2" fill="#fff" stroke="#333" stroke-width=".6"/>
<circle cx="476.5" cy="167.7" r="1.2" fill="#fff" stroke="#333" stroke-width=".6"/>
<circle cx="468.4" cy="184" r="1.2" fill="#fff" stroke="#333" stroke-width=".6"/>
<circle cx="461.4" cy="198" r="1.2" fill="#fff" stroke="#333" stroke-width=".6"/>
<circle cx="458.6" cy="213" r="1.2" fill="#fff" stroke="#333" stroke-width=".6"/>
<circle cx="449.6" cy="239.7" r="1.2" fill="#fff" stroke="#333" stroke-width=".6"/>
<circle cx="442.6" cy="253.7" r="1.2" fill="#fff" stroke="#333" stroke-width=".6"/>
<circle cx="443.8" cy="266.4" r="1.2" fill="#fff" stroke="#333" stroke-width=".6"/>
<circle cx="440.3" cy="281" r="1.2" fill="#fff" stroke="#333" stroke-width=".6"/>
<circle cx="451.5" cy="224" r="1.2" fill="#fff" stroke="#333" stroke-width=".6"/>
<circle cx="412" cy="245.5" r="1.2" fill="#fff" stroke="#333" stroke-width=".6"/>
<circle cx="334.5" cy="256" r="1.2" fill="#fff" stroke="#333" stroke-width=".6"/>
<circle cx="370" cy="256" r="1.2" fill="#fff" stroke="#333" stroke-width=".6"/>
<circle cx="386" cy="267" r="1.2" fill="#fff" stroke="#333" stroke-width=".6"/>
<circle cx="327" cy="291.7" r="1.2" fill="#fff" stroke="#333" stroke-width=".6"/>
<circle cx="373" cy="299.4" r="1.2" fill="#fff" stroke="#333" stroke-width=".6"/>
<circle cx="386.6" cy="290" r="1.2" fill="#fff" stroke="#333" stroke-width=".6"/>
<circle cx="356.2" cy="302.8" r="1.2" fill="#fff" stroke="#333" stroke-width=".6"/>
<circle cx="336" cy="314" r="1.2" fill="#fff" stroke="#333" stroke-width=".6"/>
<circle cx="420" cy="240" r="1.2" fill="#fff" stroke="#333" stroke-width=".6"/>
<!-- heat overlay -->
<rect x="322.500" y="103.500" width="216" height="235.500" fill="#ff0000" fill-opacity=".4"/>
<g clip-path="url(#ov)"><g opacity=".5" filter="url(#bl)">
<rect x="359" y="103" width="12" height="6" fill="rgb(40,112,108)"/>
<rect x="383" y="103" width="12" height="6" fill="rgb(0,150,75)"/>
<rect x="395" y="103" width="6" height="6" fill="rgb(0,185,30)"/>
<rect x="401" y="103" width="6" height="6" fill="rgb(0,150,75)"/>
<rect x="407" y="103" width="18" height="6" fill="rgb(70,218,20)"/>
<rect x="425" y="103" width="6" height="6" fill="rgb(0,185,30)"/>
<rect x="431" y="103" width="6" height="6" fill="rgb(0,150,75)"/>
<rect x="437" y="103" width="6" height="6" fill="rgb(70,218,20)"/>
<rect x="443" y="103" width="24" height="6" fill="rgb(185,245,5)"/>
<rect x="467" y="103" width="6" height="6" fill="rgb(255,125,0)"/>
<rect x="473" y="103" width="12" height="6" fill="rgb(255,225,0)"/>
<rect x="485" y="103" width="12" height="6" fill="rgb(185,245,5)"/>
<rect x="497" y="103" width="6" height="6" fill="rgb(70,218,20)"/>
<rect x="503" y="103" width="12" height="6" fill="rgb(255,225,0)"/>
<rect x="515" y="103" width="6" height="6" fill="rgb(255,125,0)"/>
<rect x="347" y="109" width="12" height="6" fill="rgb(40,112,108)"/>
<rect x="359" y="109" width="6" height="6" fill="rgb(0,150,75)"/>
<rect x="365" y="109" width="12" height="6" fill="rgb(0,185,30)"/>
<rect x="377" y="109" width="6" height="6" fill="rgb(0,150,75)"/>
<rect x="383" y="109" width="18" height="6" fill="rgb(0,185,30)"/>
<rect x="401" y="109" width="6" height="6" fill="rgb(0,150,75)"/>
<rect x="407" y="109" width="12" height="6" fill="rgb(185,245,5)"/>
<rect x="419" y="109" width="6" height="6" fill="rgb(70,218,20)"/>
<rect x="425" y="109" width="12" height="6" fill="rgb(0,185,30)"/>
<rect x="437" y="109" width="18" height="6" fill="rgb(185,245,5)"/>
<rect x="455" y="109" width="24" height="6" fill="rgb(255,225,0)"/>
<rect x="479" y="109" width="18" height="6" fill="rgb(185,245,5)"/>
<rect x="497" y="109" width="6" height="6" fill="rgb(255,225,0)"/>
<rect x="503" y="109" width="12" height="6" fill="rgb(255,125,0)"/>
<rect x="515" y="109" width="6" height="6" fill="rgb(255,225,0)"/>
<rect x="341" y="115" width="6" height="6" fill="rgb(40,112,108)"/>
<rect x="359" y="115" width="6" height="6" fill="rgb(0,150,75)"/>
<rect x="365" y="115" width="12" height="6" fill="rgb(0,185,30)"/>
<rect x="377" y="115" width="6" height="6" fill="rgb(0,150,75)"/>
<rect x="383" y="115" width="24" height="6" fill="rgb(0,185,30)"/>
<rect x="407" y="115" width="12" height="6" fill="rgb(185,245,5)"/>
<rect x="419" y="115" width="6" height="6" fill="rgb(70,218,20)"/>
<rect x="425" y="115" width="12" height="6" fill="rgb(0,185,30)"/>
<rect x="437" y="115" width="12" height="6" fill="rgb(255,55,0)"/>
<rect x="449" y="115" width="6" height="6" fill="rgb(185,245,5)"/>
<rect x="455" y="115" width="24" height="6" fill="rgb(255,225,0)"/>
<rect x="479" y="115" width="36" height="6" fill="rgb(255,125,0)"/>
<rect x="515" y="115" width="6" height="6" fill="rgb(255,225,0)"/>
<rect x="323" y="121" width="6" height="6" fill="rgb(40,112,108)"/>
<rect x="329" y="121" width="12" height="6" fill="rgb(0,150,75)"/>
<rect x="341" y="121" width="6" height="6" fill="rgb(40,112,108)"/>
<rect x="359" y="121" width="12" height="6" fill="rgb(0,150,75)"/>
<rect x="371" y="121" width="6" height="6" fill="rgb(40,112,108)"/>
<rect x="377" y="121" width="18" height="6" fill="rgb(0,150,75)"/>
<rect x="395" y="121" width="6" height="6" fill="rgb(0,185,30)"/>
<rect x="401" y="121" width="18" height="6" fill="rgb(70,218,20)"/>
<rect x="419" y="121" width="6" height="6" fill="rgb(185,245,5)"/>
<rect x="425" y="121" width="12" height="6" fill="rgb(0,185,30)"/>
<rect x="437" y="121" width="12" height="6" fill="rgb(255,55,0)"/>
<rect x="449" y="121" width="6" height="6" fill="rgb(185,245,5)"/>
<rect x="455" y="121" width="24" height="6" fill="rgb(255,225,0)"/>
<rect x="479" y="121" width="36" height="6" fill="rgb(255,125,0)"/>
<rect x="515" y="121" width="6" height="6" fill="rgb(0,185,30)"/>
<rect x="323" y="127" width="6" height="6" fill="rgb(0,185,30)"/>
<rect x="329" y="127" width="6" height="6" fill="rgb(70,218,20)"/>
<rect x="335" y="127" width="6" height="6" fill="rgb(0,185,30)"/>
<rect x="341" y="127" width="6" height="6" fill="rgb(0,150,75)"/>
<rect x="347" y="127" width="6" height="6" fill="rgb(40,112,108)"/>
<rect x="359" y="127" width="6" height="6" fill="rgb(40,112,108)"/>
<rect x="365" y="127" width="6" height="6" fill="rgb(0,150,75)"/>
<rect x="371" y="127" width="6" height="6" fill="rgb(40,112,108)"/>
<rect x="377" y="127" width="18" height="6" fill="rgb(0,150,75)"/>
<rect x="395" y="127" width="6" height="6" fill="rgb(0,185,30)"/>
<rect x="401" y="127" width="12" height="6" fill="rgb(70,218,20)"/>
<rect x="413" y="127" width="6" height="6" fill="rgb(0,185,30)"/>
<rect x="419" y="127" width="6" height="6" fill="rgb(255,225,0)"/>
<rect x="425" y="127" width="6" height="6" fill="rgb(185,245,5)"/>
<rect x="431" y="127" width="6" height="6" fill="rgb(0,150,75)"/>
<rect x="437" y="127" width="6" height="6" fill="rgb(0,185,30)"/>
<rect x="443" y="127" width="6" height="6" fill="rgb(70,218,20)"/>
<rect x="449" y="127" width="6" height="6" fill="rgb(185,245,5)"/>
<rect x="455" y="127" width="6" height="6" fill="rgb(255,225,0)"/>
<rect x="461" y="127" width="6" height="6" fill="rgb(255,125,0)"/>
<rect x="467" y="127" width="6" height="6" fill="rgb(185,245,5)"/>
<rect x="473" y="127" width="6" height="6" fill="rgb(255,125,0)"/>
<rect x="479" y="127" width="6" height="6" fill="rgb(255,55,0)"/>
<rect x="485" y="127" width="24" height="6" fill="rgb(255,125,0)"/>
<rect x="509" y="127" width="6" height="6" fill="rgb(70,218,20)"/>
<rect x="515" y="127" width="6" height="6" fill="rgb(0,150,75)"/>
<rect x="323" y="133" width="6" height="6" fill="rgb(0,185,30)"/>
<rect x="329" y="133" width="6" height="6" fill="rgb(70,218,20)"/>
<rect x="335" y="133" width="6" height="6" fill="rgb(0,185,30)"/>
<rect x="341" y="133" width="12" height="6" fill="rgb(255,225,0)"/>
<rect x="353" y="133" width="6" height="6" fill="rgb(40,112,108)"/>
<rect x="365" y="133" width="30" height="6" fill="rgb(0,150,75)"/>
<rect x="395" y="133" width="18" height="6" fill="rgb(70,218,20)"/>
<rect x="413" y="133" width="6" height="6" fill="rgb(0,185,30)"/>
<rect x="419" y="133" width="6" height="6" fill="rgb(255,225,0)"/>
<rect x="425" y="133" width="6" height="6" fill="rgb(185,245,5)"/>
<rect x="431" y="133" width="6" height="6" fill="rgb(0,150,75)"/>
<rect x="437" y="133" width="6" height="6" fill="rgb(70,218,20)"/>
<rect x="443" y="133" width="6" height="6" fill="rgb(185,245,5)"/>
<rect x="449" y="133" width="6" height="6" fill="rgb(255,225,0)"/>
<rect x="455" y="133" width="6" height="6" fill="rgb(255,125,0)"/>
<rect x="461" y="133" width="6" height="6" fill="rgb(255,55,0)"/>
<rect x="467" y="133" width="6" height="6" fill="rgb(185,245,5)"/>
<rect x="473" y="133" width="24" height="6" fill="rgb(255,55,0)"/>
<rect x="497" y="133" width="6" height="6" fill="rgb(70,218,20)"/>
<rect x="503" y="133" width="18" height="6" fill="rgb(0,150,75)"/>
<rect x="323" y="139" width="6" height="6" fill="rgb(255,225,0)"/>
<rect x="335" y="139" width="6" height="6" fill="rgb(0,150,75)"/>
<rect x="341" y="139" width="12" height="6" fill="rgb(255,225,0)"/>
<rect x="353" y="139" width="6" height="6" fill="rgb(70,218,20)"/>
<rect x="359" y="139" width="12" height="6" fill="rgb(40,112,108)"/>
<rect x="371" y="139" width="24" height="6" fill="rgb(0,150,75)"/>
<rect x="395" y="139" width="12" height="6" fill="rgb(255,225,0)"/>
<rect x="407" y="139" width="6" height="6" fill="rgb(70,218,20)"/>
<rect x="413" y="139" width="6" height="6" fill="rgb(185,245,5)"/>
<rect x="419" y="139" width="6" height="6" fill="rgb(255,125,0)"/>
<rect x="425" y="139" width="6" height="6" fill="rgb(255,225,0)"/>
<rect x="431" y="139" width="6" height="6" fill="rgb(70,218,20)"/>
<rect x="437" y="139" width="6" height="6" fill="rgb(185,245,5)"/>
<rect x="443" y="139" width="6" height="6" fill="rgb(255,225,0)"/>
<rect x="449" y="139" width="12" height="6" fill="rgb(255,125,0)"/>
<rect x="461" y="139" width="6" height="6" fill="rgb(255,55,0)"/>
<rect x="467" y="139" width="6" height="6" fill="rgb(255,125,0)"/>
<rect x="473" y="139" width="18" height="6" fill="rgb(255,55,0)"/>
<rect x="491" y="139" width="6" height="6" fill="rgb(185,245,5)"/>
<rect x="497" y="139" width="24" height="6" fill="rgb(0,150,75)"/>
<rect x="323" y="145" width="6" height="6" fill="rgb(255,225,0)"/>
<rect x="335" y="145" width="6" height="6" fill="rgb(0,150,75)"/>
<rect x="341" y="145" width="6" height="6" fill="rgb(0,185,30)"/>
<rect x="347" y="145" width="12" height="6" fill="rgb(70,218,20)"/>
<rect x="365" y="145" width="6" height="6" fill="rgb(40,112,108)"/>
<rect x="371" y="145" width="24" height="6" fill="rgb(0,150,75)"/>
<rect x="395" y="145" width="12" height="6" fill="rgb(255,225,0)"/>
<rect x="407" y="145" width="6" height="6" fill="rgb(70,218,20)"/>
<rect x="413" y="145" width="6" height="6" fill="rgb(255,225,0)"/>
<rect x="419" y="145" width="12" height="6" fill="rgb(255,125,0)"/>
<rect x="431" y="145" width="6" height="6" fill="rgb(185,245,5)"/>
<rect x="437" y="145" width="6" height="6" fill="rgb(255,225,0)"/>
<rect x="443" y="145" width="12" height="6" fill="rgb(255,125,0)"/>
<rect x="455" y="145" width="36" height="6" fill="rgb(255,55,0)"/>
<rect x="491" y="145" width="6" height="6" fill="rgb(0,185,30)"/>
<rect x="497" y="145" width="6" height="6" fill="rgb(0,150,75)"/>
<rect x="323" y="151" width="6" height="6" fill="rgb(0,150,75)"/>
<rect x="335" y="151" width="12" height="6" fill="rgb(0,150,75)"/>
<rect x="347" y="151" width="12" height="6" fill="rgb(0,185,30)"/>
<rect x="371" y="151" width="6" height="6" fill="rgb(40,112,108)"/>
<rect x="377" y="151" width="12" height="6" fill="rgb(70,218,20)"/>
<rect x="389" y="151" width="6" height="6" fill="rgb(0,150,75)"/>
<rect x="395" y="151" width="6" height="6" fill="rgb(255,225,0)"/>
<rect x="401" y="151" width="12" height="6" fill="rgb(70,218,20)"/>
<rect x="413" y="151" width="6" height="6" fill="rgb(185,245,5)"/>
<rect x="419" y="151" width="12" height="6" fill="rgb(255,225,0)"/>
<rect x="431" y="151" width="6" height="6" fill="rgb(185,245,5)"/>
<rect x="437" y="151" width="12" height="6" fill="rgb(255,125,0)"/>
<rect x="449" y="151" width="36" height="6" fill="rgb(255,55,0)"/>
<rect x="485" y="151" width="6" height="6" fill="rgb(185,245,5)"/>
<rect x="491" y="151" width="6" height="6" fill="rgb(0,150,75)"/>
<rect x="329" y="157" width="6" height="6" fill="rgb(40,112,108)"/>
<rect x="335" y="157" width="24" height="6" fill="rgb(0,150,75)"/>
<rect x="359" y="157" width="6" height="6" fill="rgb(40,112,108)"/>
<rect x="377" y="157" width="12" height="6" fill="rgb(70,218,20)"/>
<rect x="389" y="157" width="36" height="6" fill="rgb(185,245,5)"/>
<rect x="425" y="157" width="6" height="6" fill="rgb(0,185,30)"/>
<rect x="431" y="157" width="6" height="6" fill="rgb(185,245,5)"/>
<rect x="437" y="157" width="12" height="6" fill="rgb(255,125,0)"/>
<rect x="449" y="157" width="36" height="6" fill="rgb(255,55,0)"/>
<rect x="485" y="157" width="6" height="6" fill="rgb(70,218,20)"/>
<rect x="323" y="163" width="6" height="6" fill="rgb(0,150,75)"/>
<rect x="329" y="163" width="12" height="6" fill="rgb(0,185,30)"/>
<rect x="341" y="163" width="6" height="6" fill="rgb(185,245,5)"/>
<rect x="347" y="163" width="6" height="6" fill="rgb(255,225,0)"/>
<rect x="353" y="163" width="6" height="6" fill="rgb(0,185,30)"/>
<rect x="359" y="163" width="6" height="6" fill="rgb(0,150,75)"/>
<rect x="371" y="163" width="12" height="6" fill="rgb(255,225,0)"/>
<rect x="383" y="163" width="6" height="6" fill="rgb(0,150,75)"/>
<rect x="389" y="163" width="6" height="6" fill="rgb(185,245,5)"/>
<rect x="395" y="163" width="6" height="6" fill="rgb(255,125,0)"/>
<rect x="401" y="163" width="12" height="6" fill="rgb(255,225,0)"/>
<rect x="413" y="163" width="6" height="6" fill="rgb(185,245,5)"/>
<rect x="419" y="163" width="12" height="6" fill="rgb(70,218,20)"/>
<rect x="431" y="163" width="6" height="6" fill="rgb(0,185,30)"/>
<rect x="437" y="163" width="6" height="6" fill="rgb(0,150,75)"/>
<rect x="443" y="163" width="6" height="6" fill="rgb(185,245,5)"/>
<rect x="449" y="163" width="30" height="6" fill="rgb(255,55,0)"/>
<rect x="479" y="163" width="6" height="6" fill="rgb(255,125,0)"/>
<rect x="485" y="163" width="6" height="6" fill="rgb(0,185,30)"/>
<rect x="323" y="169" width="12" height="6" fill="rgb(0,185,30)"/>
<rect x="335" y="169" width="6" height="6" fill="rgb(70,218,20)"/>
<rect x="341" y="169" width="12" height="6" fill="rgb(255,125,0)"/>
<rect x="353" y="169" width="6" height="6" fill="rgb(255,225,0)"/>
<rect x="359" y="169" width="6" height="6" fill="rgb(0,185,30)"/>
<rect x="365" y="169" width="6" height="6" fill="rgb(185,245,5)"/>
<rect x="371" y="169" width="6" height="6" fill="rgb(255,225,0)"/>
<rect x="377" y="169" width="6" height="6" fill="rgb(70,218,20)"/>
<rect x="383" y="169" width="6" height="6" fill="rgb(0,150,75)"/>
<rect x="389" y="169" width="6" height="6" fill="rgb(185,245,5)"/>
<rect x="395" y="169" width="12" height="6" fill="rgb(255,225,0)"/>
<rect x="407" y="169" width="6" height="6" fill="rgb(185,245,5)"/>
<rect x="413" y="169" width="18" height="6" fill="rgb(70,218,20)"/>
<rect x="431" y="169" width="12" height="6" fill="rgb(0,185,30)"/>
<rect x="443" y="169" width="6" height="6" fill="rgb(185,245,5)"/>
<rect x="449" y="169" width="30" height="6" fill="rgb(255,55,0)"/>
<rect x="479" y="169" width="6" height="6" fill="rgb(185,245,5)"/>
<rect x="485" y="169" width="6" height="6" fill="rgb(0,150,75)"/>
<rect x="323" y="175" width="6" height="6" fill="rgb(0,185,30)"/>
<rect x="329" y="175" width="12" height="6" fill="rgb(70,218,20)"/>
<rect x="341" y="175" width="12" height="6" fill="rgb(255,125,0)"/>
<rect x="353" y="175" width="6" height="6" fill="rgb(255,225,0)"/>
<rect x="359" y="175" width="6" height="6" fill="rgb(40,112,108)"/>
<rect x="365" y="175" width="6" height="6" fill="rgb(0,150,75)"/>
<rect x="371" y="175" width="6" height="6" fill="rgb(70,218,20)"/>
<rect x="377" y="175" width="12" height="6" fill="rgb(255,225,0)"/>
<rect x="389" y="175" width="6" height="6" fill="rgb(185,245,5)"/>
<rect x="395" y="175" width="12" height="6" fill="rgb(0,185,30)"/>
<rect x="407" y="175" width="6" height="6" fill="rgb(70,218,20)"/>
<rect x="413" y="175" width="6" height="6" fill="rgb(185,245,5)"/>
<rect x="419" y="175" width="18" height="6" fill="rgb(255,225,0)"/>
<rect x="437" y="175" width="12" height="6" fill="rgb(185,245,5)"/>
<rect x="449" y="175" width="6" height="6" fill="rgb(255,225,0)"/>
<rect x="455" y="175" width="24" height="6" fill="rgb(255,55,0)"/>
<rect x="479" y="175" width="6" height="6" fill="rgb(185,245,5)"/>
<rect x="485" y="175" width="6" height="6" fill="rgb(0,185,30)"/>
<rect x="491" y="175" width="6" height="6" fill="rgb(0,150,75)"/>
<rect x="323" y="181" width="18" height="6" fill="rgb(70,218,20)"/>
<rect x="341" y="181" width="18" height="6" fill="rgb(255,125,0)"/>
<rect x="359" y="181" width="6" height="6" fill="rgb(255,225,0)"/>
<rect x="365" y="181" width="12" height="6" fill="rgb(0,185,30)"/>
<rect x="377" y="181" width="12" height="6" fill="rgb(255,225,0)"/>
<rect x="389" y="181" width="6" height="6" fill="rgb(185,245,5)"/>
<rect x="395" y="181" width="6" height="6" fill="rgb(0,185,30)"/>
<rect x="401" y="181" width="6" height="6" fill="rgb(0,150,75)"/>
<rect x="407" y="181" width="12" height="6" fill="rgb(70,218,20)"/>
<rect x="419" y="181" width="12" height="6" fill="rgb(255,125,0)"/>
<rect x="431" y="181" width="18" height="6" fill="rgb(185,245,5)"/>
<rect x="449" y="181" width="6" height="6" fill="rgb(255,225,0)"/>
<rect x="455" y="181" width="12" height="6" fill="rgb(255,55,0)"/>
<rect x="467" y="181" width="6" height="6" fill="rgb(255,0,0)"/>
<rect x="473" y="181" width="6" height="6" fill="rgb(255,125,0)"/>
<rect x="479" y="181" width="6" height="6" fill="rgb(255,225,0)"/>
<rect x="485" y="181" width="6" height="6" fill="rgb(0,185,30)"/>
<rect x="323" y="187" width="6" height="6" fill="rgb(255,225,0)"/>
<rect x="329" y="187" width="6" height="6" fill="rgb(70,218,20)"/>
<rect x="335" y="187" width="6" height="6" fill="rgb(0,185,30)"/>
<rect x="341" y="187" width="6" height="6" fill="rgb(70,218,20)"/>
<rect x="347" y="187" width="12" height="6" fill="rgb(255,125,0)"/>
<rect x="359" y="187" width="6" height="6" fill="rgb(255,225,0)"/>
<rect x="365" y="187" width="12" height="6" fill="rgb(0,185,30)"/>
<rect x="377" y="187" width="24" height="6" fill="rgb(70,218,20)"/>
<rect x="401" y="187" width="6" height="6" fill="rgb(0,150,75)"/>
<rect x="407" y="187" width="6" height="6" fill="rgb(0,185,30)"/>
<rect x="413" y="187" width="6" height="6" fill="rgb(70,218,20)"/>
<rect x="419" y="187" width="24" height="6" fill="rgb(185,245,5)"/>
<rect x="443" y="187" width="12" height="6" fill="rgb(255,225,0)"/>
<rect x="455" y="187" width="18" height="6" fill="rgb(255,55,0)"/>
<rect x="473" y="187" width="6" height="6" fill="rgb(255,125,0)"/>
<rect x="479" y="187" width="6" height="6" fill="rgb(255,225,0)"/>
<rect x="485" y="187" width="6" height="6" fill="rgb(0,150,75)"/>
<rect x="323" y="193" width="6" height="6" fill="rgb(70,218,20)"/>
<rect x="329" y="193" width="30" height="6" fill="rgb(0,150,75)"/>
<rect x="359" y="193" width="12" height="6" fill="rgb(0,185,30)"/>
<rect x="371" y="193" width="12" height="6" fill="rgb(70,218,20)"/>
<rect x="383" y="193" width="12" height="6" fill="rgb(185,245,5)"/>
<rect x="395" y="193" width="6" height="6" fill="rgb(70,218,20)"/>
<rect x="401" y="193" width="12" height="6" fill="rgb(185,245,5)"/>
<rect x="413" y="193" width="18" height="6" fill="rgb(255,225,0)"/>
<rect x="431" y="193" width="12" height="6" fill="rgb(255,55,0)"/>
<rect x="443" y="193" width="12" height="6" fill="rgb(255,225,0)"/>
<rect x="455" y="193" width="18" height="6" fill="rgb(255,55,0)"/>
<rect x="473" y="193" width="6" height="6" fill="rgb(70,218,20)"/>
<rect x="479" y="193" width="6" height="6" fill="rgb(0,150,75)"/>
<rect x="323" y="199" width="6" height="6" fill="rgb(0,185,30)"/>
<rect x="329" y="199" width="6" height="6" fill="rgb(0,150,75)"/>
<rect x="335" y="199" width="6" height="6" fill="rgb(40,112,108)"/>
<rect x="341" y="199" width="24" height="6" fill="rgb(0,150,75)"/>
<rect x="365" y="199" width="6" height="6" fill="rgb(0,185,30)"/>
<rect x="371" y="199" width="6" height="6" fill="rgb(70,218,20)"/>
<rect x="377" y="199" width="30" height="6" fill="rgb(255,225,0)"/>
<rect x="407" y="199" width="6" height="6" fill="rgb(255,125,0)"/>
<rect x="413" y="199" width="6" height="6" fill="rgb(255,55,0)"/>
<rect x="419" y="199" width="12" height="6" fill="rgb(255,0,0)"/>
<rect x="431" y="199" width="18" height="6" fill="rgb(255,55,0)"/>
<rect x="449" y="199" width="6" height="6" fill="rgb(255,225,0)"/>
<rect x="455" y="199" width="12" height="6" fill="rgb(255,55,0)"/>
<rect x="467" y="199" width="6" height="6" fill="rgb(185,245,5)"/>
<rect x="473" y="199" width="6" height="6" fill="rgb(0,150,75)"/>
<rect x="323" y="205" width="6" height="6" fill="rgb(0,185,30)"/>
<rect x="329" y="205" width="36" height="6" fill="rgb(0,150,75)"/>
<rect x="365" y="205" width="6" height="6" fill="rgb(0,185,30)"/>
<rect x="371" y="205" width="6" height="6" fill="rgb(70,218,20)"/>
<rect x="377" y="205" width="30" height="6" fill="rgb(255,225,0)"/>
<rect x="407" y="205" width="6" height="6" fill="rgb(255,125,0)"/>
<rect x="413" y="205" width="6" height="6" fill="rgb(255,55,0)"/>
<rect x="419" y="205" width="12" height="6" fill="rgb(255,0,0)"/>
<rect x="431" y="205" width="18" height="6" fill="rgb(255,55,0)"/>
<rect x="449" y="205" width="6" height="6" fill="rgb(255,125,0)"/>
<rect x="455" y="205" width="6" height="6" fill="rgb(255,55,0)"/>
<rect x="461" y="205" width="6" height="6" fill="rgb(185,245,5)"/>
<rect x="467" y="205" width="6" height="6" fill="rgb(70,218,20)"/>
<rect x="323" y="211" width="18" height="6" fill="rgb(70,218,20)"/>
<rect x="341" y="211" width="24" height="6" fill="rgb(0,150,75)"/>
<rect x="365" y="211" width="12" height="6" fill="rgb(0,185,30)"/>
<rect x="377" y="211" width="6" height="6" fill="rgb(70,218,20)"/>
<rect x="383" y="211" width="6" height="6" fill="rgb(255,225,0)"/>
<rect x="389" y="211" width="6" height="6" fill="rgb(70,218,20)"/>
<rect x="395" y="211" width="12" height="6" fill="rgb(255,225,0)"/>
<rect x="407" y="211" width="6" height="6" fill="rgb(255,125,0)"/>
<rect x="413" y="211" width="6" height="6" fill="rgb(255,55,0)"/>
<rect x="419" y="211" width="6" height="6" fill="rgb(255,0,0)"/>
<rect x="425" y="211" width="24" height="6" fill="rgb(255,55,0)"/>
<rect x="449" y="211" width="6" height="6" fill="rgb(255,125,0)"/>
<rect x="455" y="211" width="6" height="6" fill="rgb(255,55,0)"/>
<rect x="461" y="211" width="12" height="6" fill="rgb(0,150,75)"/>
<rect x="323" y="217" width="6" height="6" fill="rgb(70,218,20)"/>
<rect x="329" y="217" width="12" height="6" fill="rgb(185,245,5)"/>
<rect x="341" y="217" width="18" height="6" fill="rgb(0,185,30)"/>
<rect x="359" y="217" width="6" height="6" fill="rgb(0,150,75)"/>
<rect x="365" y="217" width="12" height="6" fill="rgb(0,185,30)"/>
<rect x="377" y="217" width="18" height="6" fill="rgb(70,218,20)"/>
<rect x="395" y="217" width="6" height="6" fill="rgb(185,245,5)"/>
<rect x="401" y="217" width="6" height="6" fill="rgb(255,225,0)"/>
<rect x="407" y="217" width="36" height="6" fill="rgb(255,125,0)"/>
<rect x="443" y="217" width="6" height="6" fill="rgb(255,55,0)"/>
<rect x="449" y="217" width="6" height="6" fill="rgb(255,125,0)"/>
<rect x="455" y="217" width="6" height="6" fill="rgb(185,245,5)"/>
<rect x="461" y="217" width="6" height="6" fill="rgb(0,150,75)"/>
<rect x="323" y="223" width="6" height="6" fill="rgb(185,245,5)"/>
<rect x="329" y="223" width="12" height="6" fill="rgb(255,125,0)"/>
<rect x="341" y="223" width="18" height="6" fill="rgb(185,245,5)"/>
<rect x="359" y="223" width="6" height="6" fill="rgb(0,185,30)"/>
<rect x="365" y="223" width="6" height="6" fill="rgb(70,218,20)"/>
<rect x="371" y="223" width="30" height="6" fill="rgb(185,245,5)"/>
<rect x="401" y="223" width="30" height="6" fill="rgb(255,225,0)"/>
<rect x="431" y="223" width="12" height="6" fill="rgb(255,125,0)"/>
<rect x="443" y="223" width="6" height="6" fill="rgb(255,55,0)"/>
<rect x="449" y="223" width="6" height="6" fill="rgb(255,125,0)"/>
<rect x="455" y="223" width="6" height="6" fill="rgb(70,218,20)"/>
<rect x="461" y="223" width="6" height="6" fill="rgb(0,150,75)"/>
<rect x="323" y="229" width="6" height="6" fill="rgb(255,125,0)"/>
<rect x="329" y="229" width="30" height="6" fill="rgb(255,55,0)"/>
<rect x="359" y="229" width="18" height="6" fill="rgb(255,125,0)"/>
<rect x="377" y="229" width="6" height="6" fill="rgb(255,225,0)"/>
<rect x="383" y="229" width="18" height="6" fill="rgb(185,245,5)"/>
<rect x="401" y="229" width="12" height="6" fill="rgb(255,225,0)"/>
<rect x="413" y="229" width="18" height="6" fill="rgb(185,245,5)"/>
<rect x="431" y="229" width="12" height="6" fill="rgb(255,125,0)"/>
<rect x="443" y="229" width="6" height="6" fill="rgb(255,55,0)"/>
<rect x="449" y="229" width="6" height="6" fill="rgb(255,125,0)"/>
<rect x="455" y="229" width="6" height="6" fill="rgb(70,218,20)"/>
<rect x="323" y="235" width="6" height="6" fill="rgb(255,125,0)"/>
<rect x="329" y="235" width="18" height="6" fill="rgb(255,55,0)"/>
<rect x="347" y="235" width="30" height="6" fill="rgb(255,125,0)"/>
<rect x="377" y="235" width="18" height="6" fill="rgb(185,245,5)"/>
<rect x="395" y="235" width="6" height="6" fill="rgb(255,225,0)"/>
<rect x="401" y="235" width="12" height="6" fill="rgb(255,125,0)"/>
<rect x="413" y="235" width="18" height="6" fill="rgb(185,245,5)"/>
<rect x="431" y="235" width="12" height="6" fill="rgb(255,125,0)"/>
<rect x="443" y="235" width="6" height="6" fill="rgb(255,55,0)"/>
<rect x="449" y="235" width="6" height="6" fill="rgb(255,125,0)"/>
<rect x="455" y="235" width="6" height="6" fill="rgb(0,150,75)"/>
<rect x="323" y="241" width="36" height="6" fill="rgb(255,125,0)"/>
<rect x="359" y="241" width="6" height="6" fill="rgb(255,225,0)"/>
<rect x="365" y="241" width="6" height="6" fill="rgb(185,245,5)"/>
<rect x="371" y="241" width="6" height="6" fill="rgb(70,218,20)"/>
<rect x="377" y="241" width="18" height="6" fill="rgb(0,185,30)"/>
<rect x="395" y="241" width="6" height="6" fill="rgb(255,225,0)"/>
<rect x="401" y="241" width="12" height="6" fill="rgb(255,125,0)"/>
<rect x="413" y="241" width="18" height="6" fill="rgb(185,245,5)"/>
<rect x="431" y="241" width="6" height="6" fill="rgb(255,125,0)"/>
<rect x="437" y="241" width="12" height="6" fill="rgb(255,55,0)"/>
<rect x="449" y="241" width="6" height="6" fill="rgb(255,125,0)"/>
<rect x="455" y="241" width="6" height="6" fill="rgb(0,150,75)"/>
<rect x="323" y="247" width="6" height="6" fill="rgb(255,55,0)"/>
<rect x="329" y="247" width="12" height="6" fill="rgb(255,125,0)"/>
<rect x="341" y="247" width="18" height="6" fill="rgb(255,225,0)"/>
<rect x="359" y="247" width="12" height="6" fill="rgb(185,245,5)"/>
<rect x="371" y="247" width="6" height="6" fill="rgb(70,218,20)"/>
<rect x="377" y="247" width="18" height="6" fill="rgb(0,185,30)"/>
<rect x="395" y="247" width="18" height="6" fill="rgb(255,225,0)"/>
<rect x="413" y="247" width="12" height="6" fill="rgb(185,245,5)"/>
<rect x="425" y="247" width="12" height="6" fill="rgb(255,225,0)"/>
<rect x="437" y="247" width="12" height="6" fill="rgb(255,125,0)"/>
<rect x="449" y="247" width="6" height="6" fill="rgb(255,225,0)"/>
<rect x="455" y="247" width="6" height="6" fill="rgb(0,150,75)"/>
<rect x="323" y="253" width="6" height="6" fill="rgb(255,55,0)"/>
<rect x="329" y="253" width="12" height="6" fill="rgb(255,125,0)"/>
<rect x="341" y="253" width="6" height="6" fill="rgb(255,225,0)"/>
<rect x="347" y="253" width="6" height="6" fill="rgb(185,245,5)"/>
<rect x="353" y="253" width="12" height="6" fill="rgb(70,218,20)"/>
<rect x="365" y="253" width="12" height="6" fill="rgb(185,245,5)"/>
<rect x="377" y="253" width="6" height="6" fill="rgb(70,218,20)"/>
<rect x="383" y="253" width="12" height="6" fill="rgb(0,185,30)"/>
<rect x="395" y="253" width="6" height="6" fill="rgb(185,245,5)"/>
<rect x="401" y="253" width="12" height="6" fill="rgb(70,218,20)"/>
<rect x="413" y="253" width="18" height="6" fill="rgb(185,245,5)"/>
<rect x="431" y="253" width="6" height="6" fill="rgb(255,225,0)"/>
<rect x="437" y="253" width="12" height="6" fill="rgb(255,125,0)"/>
<rect x="449" y="253" width="6" height="6" fill="rgb(185,245,5)"/>
<rect x="455" y="253" width="6" height="6" fill="rgb(0,150,75)"/>
<rect x="323" y="259" width="12" height="6" fill="rgb(255,125,0)"/>
<rect x="335" y="259" width="12" height="6" fill="rgb(255,225,0)"/>
<rect x="347" y="259" width="6" height="6" fill="rgb(185,245,5)"/>
<rect x="353" y="259" width="12" height="6" fill="rgb(0,185,30)"/>
<rect x="365" y="259" width="6" height="6" fill="rgb(0,150,75)"/>
<rect x="371" y="259" width="24" height="6" fill="rgb(0,185,30)"/>
<rect x="395" y="259" width="6" height="6" fill="rgb(70,218,20)"/>
<rect x="401" y="259" width="6" height="6" fill="rgb(0,185,30)"/>
<rect x="407" y="259" width="12" height="6" fill="rgb(70,218,20)"/>
<rect x="419" y="259" width="12" height="6" fill="rgb(185,245,5)"/>
<rect x="431" y="259" width="6" height="6" fill="rgb(255,225,0)"/>
<rect x="437" y="259" width="12" height="6" fill="rgb(255,125,0)"/>
<rect x="449" y="259" width="6" height="6" fill="rgb(185,245,5)"/>
<rect x="455" y="259" width="6" height="6" fill="rgb(0,150,75)"/>
<rect x="323" y="265" width="12" height="6" fill="rgb(255,125,0)"/>
<rect x="335" y="265" width="6" height="6" fill="rgb(255,225,0)"/>
<rect x="341" y="265" width="6" height="6" fill="rgb(185,245,5)"/>
<rect x="347" y="265" width="6" height="6" fill="rgb(70,218,20)"/>
<rect x="353" y="265" width="12" height="6" fill="rgb(0,185,30)"/>
<rect x="365" y="265" width="12" height="6" fill="rgb(0,150,75)"/>
<rect x="377" y="265" width="36" height="6" fill="rgb(0,185,30)"/>
<rect x="413" y="265" width="18" height="6" fill="rgb(70,218,20)"/>
<rect x="431" y="265" width="6" height="6" fill="rgb(255,225,0)"/>
<rect x="437" y="265" width="12" height="6" fill="rgb(255,125,0)"/>
<rect x="449" y="265" width="6" height="6" fill="rgb(185,245,5)"/>
<rect x="455" y="265" width="6" height="6" fill="rgb(0,150,75)"/>
<rect x="323" y="271" width="6" height="6" fill="rgb(255,55,0)"/>
<rect x="329" y="271" width="12" height="6" fill="rgb(255,125,0)"/>
<rect x="341" y="271" width="6" height="6" fill="rgb(185,245,5)"/>
<rect x="347" y="271" width="18" height="6" fill="rgb(0,185,30)"/>
<rect x="365" y="271" width="6" height="6" fill="rgb(0,150,75)"/>
<rect x="371" y="271" width="6" height="6" fill="rgb(40,112,108)"/>
<rect x="377" y="271" width="42" height="6" fill="rgb(0,185,30)"/>
<rect x="419" y="271" width="12" height="6" fill="rgb(70,218,20)"/>
<rect x="431" y="271" width="6" height="6" fill="rgb(185,245,5)"/>
<rect x="437" y="271" width="12" height="6" fill="rgb(255,125,0)"/>
<rect x="449" y="271" width="6" height="6" fill="rgb(185,245,5)"/>
<rect x="455" y="271" width="6" height="6" fill="rgb(0,150,75)"/>
<rect x="323" y="277" width="18" height="6" fill="rgb(255,55,0)"/>
<rect x="341" y="277" width="6" height="6" fill="rgb(185,245,5)"/>
<rect x="347" y="277" width="6" height="6" fill="rgb(0,150,75)"/>
<rect x="353" y="277" width="12" height="6" fill="rgb(0,185,30)"/>
<rect x="365" y="277" width="12" height="6" fill="rgb(0,150,75)"/>
<rect x="377" y="277" width="6" height="6" fill="rgb(0,185,30)"/>
<rect x="383" y="277" width="6" height="6" fill="rgb(185,245,5)"/>
<rect x="389" y="277" width="6" height="6" fill="rgb(255,225,0)"/>
<rect x="395" y="277" width="12" height="6" fill="rgb(255,125,0)"/>
<rect x="407" y="277" width="12" height="6" fill="rgb(255,225,0)"/>
<rect x="419" y="277" width="12" height="6" fill="rgb(70,218,20)"/>
<rect x="431" y="277" width="6" height="6" fill="rgb(185,245,5)"/>
<rect x="437" y="277" width="12" height="6" fill="rgb(255,125,0)"/>
<rect x="449" y="277" width="6" height="6" fill="rgb(0,185,30)"/>
<rect x="323" y="283" width="18" height="6" fill="rgb(255,55,0)"/>
<rect x="341" y="283" width="6" height="6" fill="rgb(185,245,5)"/>
<rect x="347" y="283" width="18" height="6" fill="rgb(0,185,30)"/>
<rect x="365" y="283" width="12" height="6" fill="rgb(70,218,20)"/>
<rect x="377" y="283" width="6" height="6" fill="rgb(185,245,5)"/>
<rect x="383" y="283" width="18" height="6" fill="rgb(255,55,0)"/>
<rect x="401" y="283" width="18" height="6" fill="rgb(255,125,0)"/>
<rect x="419" y="283" width="18" height="6" fill="rgb(185,245,5)"/>
<rect x="437" y="283" width="12" height="6" fill="rgb(255,125,0)"/>
<rect x="449" y="283" width="6" height="6" fill="rgb(0,150,75)"/>
<rect x="323" y="289" width="18" height="6" fill="rgb(255,55,0)"/>
<rect x="341" y="289" width="12" height="6" fill="rgb(185,245,5)"/>
<rect x="353" y="289" width="12" height="6" fill="rgb(70,218,20)"/>
<rect x="365" y="289" width="18" height="6" fill="rgb(255,225,0)"/>
<rect x="383" y="289" width="18" height="6" fill="rgb(255,55,0)"/>
<rect x="401" y="289" width="18" height="6" fill="rgb(255,125,0)"/>
<rect x="419" y="289" width="12" height="6" fill="rgb(185,245,5)"/>
<rect x="431" y="289" width="6" height="6" fill="rgb(70,218,20)"/>
<rect x="437" y="289" width="6" height="6" fill="rgb(0,150,75)"/>
<rect x="323" y="295" width="18" height="6" fill="rgb(255,55,0)"/>
<rect x="341" y="295" width="6" height="6" fill="rgb(255,125,0)"/>
<rect x="347" y="295" width="12" height="6" fill="rgb(255,55,0)"/>
<rect x="359" y="295" width="6" height="6" fill="rgb(185,245,5)"/>
<rect x="365" y="295" width="18" height="6" fill="rgb(255,225,0)"/>
<rect x="383" y="295" width="6" height="6" fill="rgb(255,55,0)"/>
<rect x="389" y="295" width="6" height="6" fill="rgb(255,125,0)"/>
<rect x="395" y="295" width="6" height="6" fill="rgb(255,225,0)"/>
<rect x="401" y="295" width="18" height="6" fill="rgb(40,112,108)"/>
<rect x="323" y="301" width="36" height="6" fill="rgb(255,55,0)"/>
<rect x="359" y="301" width="6" height="6" fill="rgb(185,245,5)"/>
<rect x="365" y="301" width="12" height="6" fill="rgb(255,225,0)"/>
<rect x="377" y="301" width="6" height="6" fill="rgb(70,218,20)"/>
<rect x="383" y="301" width="6" height="6" fill="rgb(0,150,75)"/>
<rect x="323" y="307" width="36" height="6" fill="rgb(255,55,0)"/>
<rect x="359" y="307" width="6" height="6" fill="rgb(255,225,0)"/>
<rect x="365" y="307" width="12" height="6" fill="rgb(185,245,5)"/>
<rect x="377" y="307" width="6" height="6" fill="rgb(0,185,30)"/>
<rect x="383" y="307" width="6" height="6" fill="rgb(40,112,108)"/>
<rect x="323" y="313" width="36" height="6" fill="rgb(255,55,0)"/>
<rect x="359" y="313" width="12" height="6" fill="rgb(185,245,5)"/>
<rect x="371" y="313" width="6" height="6" fill="rgb(70,218,20)"/>
<rect x="377" y="313" width="6" height="6" fill="rgb(40,112,108)"/>
<rect x="329" y="319" width="12" height="6" fill="rgb(70,218,20)"/>
<rect x="341" y="319" width="6" height="6" fill="rgb(185,245,5)"/>
<rect x="347" y="319" width="12" height="6" fill="rgb(255,125,0)"/>
<rect x="359" y="319" width="6" height="6" fill="rgb(70,218,20)"/>
<rect x="365" y="319" width="6" height="6" fill="rgb(0,150,75)"/>
<rect x="335" y="325" width="6" height="6" fill="rgb(0,185,30)"/>
<rect x="341" y="325" width="6" height="6" fill="rgb(70,218,20)"/>
<rect x="347" y="325" width="12" height="6" fill="rgb(255,125,0)"/>
<rect x="359" y="325" width="6" height="6" fill="rgb(70,218,20)"/>
<rect x="365" y="325" width="6" height="6" fill="rgb(0,150,75)"/>
<rect x="371" y="325" width="6" height="6" fill="rgb(40,112,108)"/>
<rect x="341" y="331" width="6" height="6" fill="rgb(0,150,75)"/>
<rect x="347" y="331" width="6" height="6" fill="rgb(255,125,0)"/>
<rect x="353" y="331" width="6" height="6" fill="rgb(255,225,0)"/>
<rect x="359" y="331" width="6" height="6" fill="rgb(0,185,30)"/>
<rect x="365" y="331" width="12" height="6" fill="rgb(40,112,108)"/>
<rect x="341" y="337" width="6" height="2" fill="rgb(40,112,108)"/>
<rect x="347" y="337" width="12" height="2" fill="rgb(185,245,5)"/>
<rect x="359" y="337" width="6" height="2" fill="rgb(0,150,75)"/>
<rect x="365" y="337" width="12" height="2" fill="rgb(40,112,108)"/>
</g></g>
<rect x="477.5" y="216" width="11.5" height="12.3" fill="rgb(0,160,90)" opacity=".5"/>
<g fill="#7fa8e8" opacity=".07"><rect x="395.5" y="308" width="10" height="13"/><rect x="411" y="300" width="11.5" height="13.5"/><rect x="439.4" y="308" width="11.6" height="15.5"/><rect x="513" y="178" width="11" height="12"/><rect x="489" y="200" width="11" height="14"/><rect x="520.5" y="160" width="10.5" height="13"/></g>
<rect x="322.500" y="103.500" width="216" height="235.500" fill="none" stroke="#f23d4c" stroke-width="1.2"/>
<!-- copyright strip -->
<rect x="236" y="399" width="402" height="11" fill="url(#cst)"/>
<!-- scale box -->
<rect x="510" y="373" width="128" height="26" fill="#4f74a3" fill-opacity=".66"/>
<g stroke="#fff" stroke-width="1" fill="none"><path d="M515.500,378 V393 M515.500,385.500 H561.500 M544.500,378 V385.500 M561.500,385.500 V393"/></g>
<g fill="#fff" font-size="6" text-anchor="middle"><text x="530" y="384">100 km</text><text x="538.500" y="392.500">100 mi</text></g>
<g fill="#eef3fa" font-size="6"><text x="587" y="384">Lon: 156.13081</text><text x="587" y="391.500">Lat: -33.25315</text></g>
<text x="377" y="407" font-size="5.76" fill="#333">Map data ©2011 Europa Technologies, GBRMPA, Google, Whereis(R), Sensis Pty Ltd - <tspan text-decoration="underline">Terms of Use</tspan></text>
<text x="224.500" y="404.5" font-family="Liberation Serif, serif" font-size="12" fill="#fff" stroke="#6f7f96" stroke-width=".45" paint-order="stroke" textLength="32.5" lengthAdjust="spacingAndGlyphs">Google</text>
<!-- left shadow -->
<rect x="223" y="34" width="4" height="375" fill="url(#lsh)"/>
<!-- pan controls -->
<g>
<g fill="#3c3c3c" stroke="#666" stroke-width=".6"><circle cx="240" cy="46" r="5"/><circle cx="234" cy="57" r="5"/><circle cx="246" cy="57" r="5"/><circle cx="240" cy="67.500" r="5"/><circle cx="240" cy="82" r="4.500"/><circle cx="240" cy="96.500" r="4.800"/><circle cx="240" cy="218" r="5"/></g>
<g stroke="#fff" stroke-width="1.300" fill="none" stroke-linecap="round"><path d="M237.800,47 L240,44.800 L242.200,47"/><path d="M237.800,66.500 L240,68.700 L242.200,66.500"/><path d="M235,54.800 L232.800,57 L235,59.200"/><path d="M245,54.800 L247.200,57 L245,59.200"/><path d="M237.500,96.500 H242.500 M240,94 V99"/><path d="M237.5,218 H242.5"/></g>
<circle cx="240" cy="82" r="2.600" fill="#fff"/><circle cx="240" cy="82" r="1.100" fill="#3c3c3c"/>
<rect x="239.5" y="102" width="1" height="128" fill="#999" opacity=".45"/>
<rect x="235.5" y="158.500" width="10" height="4.2" rx="1" fill="#3c3c3c" stroke="#ddd" stroke-width=".7"/><rect x="237" y="229.500" width="4" height="4" fill="none" stroke="#666" stroke-width=".6"/><path d="M239,229.500 V233.500 M237,231.500 H241" stroke="#666" stroke-width=".5"/>
</g>
</svg>

<!-- HEADER -->
<div id="hdr" class="abs"></div>
<svg class="abs" style="left:9px;top:7px" width="24" height="22" viewBox="0 0 24 22"><rect x="2.500" y="2.200" width="16.500" height="16" fill="#fff"/><g stroke="#e8501f" stroke-linecap="round" fill="none"><path d="M10.7,9.8 L11.7,3.6" stroke-width="2"/><path d="M10.7,9.8 L19.8,4.6" stroke-width="2.3"/><path d="M10.7,9.8 L2.4,8.7" stroke-width="2"/><path d="M5.6,9.6 L4.3,12.4" stroke-width="1.6"/><path d="M10.4,10.5 L7,15.3" stroke-width="1.9"/><path d="M11,10 L14.5,18.4" stroke-width="2.1"/></g></svg>
<svg class="abs" style="left:28px;top:4px" width="160" height="28" viewBox="28 4 160 28" font-family="Liberation Sans, Arial, sans-serif">
<text x="31.2" y="19.6" font-size="12" font-weight="bold" fill="#fff" textLength="32.8" lengthAdjust="spacingAndGlyphs">ATLAS</text>
<text x="65.3" y="19.6" font-size="8.6" font-weight="bold" fill="#fff" textLength="14.5" lengthAdjust="spacingAndGlyphs">OF</text>
<text x="81" y="19.6" font-size="12" fill="#ef5a28" textLength="37.6" lengthAdjust="spacingAndGlyphs">LIVING</text>
<text x="119.2" y="19.6" font-size="12" font-weight="bold" fill="#fff" textLength="63.5" lengthAdjust="spacingAndGlyphs">AUSTRALIA</text>
<text x="31.2" y="26" font-size="6.4" fill="#e4e4e4" textLength="87.5" lengthAdjust="spacingAndGlyphs">sharing biodiversity knowledge</text>
</svg>
<div class="abs" style="left:423.500px;top:14px;color:#fff;font-size:6.9px;white-space:nowrap">Home | Log in</div>
<div class="abs" style="left:473px;top:8.500px;width:124.500px;height:15px;background:#fff"></div>
<div class="abs" style="left:480.500px;top:11.500px;font-size:7.9px;color:#222;white-space:nowrap">Search the Atlas</div>
<div class="abs" style="left:604px;top:8.500px;width:19px;height:14.500px;background:#f6f6f6;border-radius:1.500px"></div>
<svg class="abs" style="left:608px;top:10px" width="12" height="12" viewBox="0 0 12 12"><circle cx="4.800" cy="4.800" r="2.300" fill="none" stroke="#222" stroke-width="1.100"/><path d="M6.600,6.600 L8.700,8.700" stroke="#222" stroke-width="1.400" stroke-linecap="round"/></svg>

<!-- MENU -->
<div id="menu" class="abs"><span style="left:5.5px">Add to Map</span><span style="left:56px">Tools</span><span style="left:83.5px">Import</span><span style="left:116.500px">Export</span><span style="left:149px">Help</span></div>
<svg class="abs" style="left:212px;top:35px" width="11" height="11" viewBox="0 0 11 11"><circle cx="5.300" cy="5.200" r="4" fill="#fff"/><path d="M6,3.500 L4.300,5.200 L6,6.900" stroke="#888" stroke-width="1" fill="none"/></svg>

<!-- LAYER ROWS -->
<div class="abs row" style="top:55px"><span class="cb"></span><span class="tx">Species Richness</span></div>
<div class="abs row" style="top:70px;background:#0c5364"><span class="cb"></span><span class="tx" style="color:#fff">Occurrence Density</span></div>
<div class="abs row" style="top:85px"><span class="cb"></span><span class="tx">My Area</span></div>
<div class="abs row" style="top:100px;background:#eeeeee;height:15px"><span class="cb" style="background:#d8d4cc"></span><span class="tx">Map options</span></div>
<svg class="abs" style="left:3px;top:55px" width="212" height="60" viewBox="0 0 212 60">
<g id="li"><g fill="#3b6fd0"><rect x="14.500" y="4.500" width="1.200" height="1.200"/><rect x="14.500" y="7.300" width="1.200" height="1.200"/><rect x="14.500" y="10.100" width="1.200" height="1.200"/></g><g fill="#555"><rect x="17" y="4.600" width="5" height="1"/><rect x="17" y="7.400" width="5" height="1"/><rect x="17" y="10.200" width="5" height="1"/></g></g>
<use href="#li" y="15" opacity=".55"/><use href="#li" y="45"/>
<rect x="14" y="33" width="8.500" height="8.500" fill="#e6f0fb" stroke="#b8d0ea" stroke-width=".5"/><ellipse cx="18.200" cy="37.300" rx="3" ry="1.800" transform="rotate(-35 18.200 37.300)" fill="#fff" stroke="#666" stroke-width=".7"/>
<path d="M6.200,21.800 L7.800,23.800 L10.600,19.600" stroke="#000" stroke-width="1.300" fill="none"/>
<path d="M6.200,36.800 L7.800,38.800 L10.600,34.600" stroke="#000" stroke-width="1.300" fill="none"/>
<g id="ic"><circle cx="177" cy="7.300" r="3.100" fill="#e9f3e4" stroke="#d9a65a" stroke-width="1.100"/><circle cx="178.300" cy="8.600" r="1.700" fill="#4caf50"/><path d="M179.500,10 L181.800,12.300" stroke="#c8843c" stroke-width="1.500" stroke-linecap="round"/>
<circle cx="190.600" cy="7.800" r="4" fill="#5b8fd0"/><circle cx="190.600" cy="7.800" r="3.200" fill="#7aa7dd"/><rect x="190.100" y="6.800" width="1.100" height="3.300" fill="#fff"/><rect x="190.100" y="5.200" width="1.100" height="1" fill="#fff"/>
<rect x="199.500" y="5.800" width="5" height="6.700" rx=".8" fill="#e8e8e8" stroke="#666" stroke-width=".8"/><rect x="198.700" y="4.300" width="6.600" height="1.200" fill="#777"/><rect x="200.800" y="3.300" width="2.400" height="1" fill="#777"/><path d="M201,7 V11.500 M203,7 V11.500" stroke="#999" stroke-width=".6"/></g>
<use href="#ic" y="15"/><use href="#ic" y="30"/>
</svg>

<!-- LAYER CONTROLS -->
<div class="abs" style="left:3.500px;top:155px;font-size:9.9px;font-style:italic;color:#e0431c;white-space:nowrap;letter-spacing:0.1px">Occurrence Density</div>
<div class="abs lbl" style="left:2px;top:175px">Layer name</div>
<div class="abs" style="left:40.500px;top:175px;width:140px;height:10.500px;border:1px solid #c8c8c8;background:#fff"></div>
<div class="abs" style="left:44px;top:177.500px;font-size:6.6px;color:#2b8a8c;white-space:nowrap">Occurrence Density</div>
<div class="abs" style="left:185px;top:176px;width:36px;height:10px;background:#d9d7d2;border-right:1.500px solid #6a6a6a;border-bottom:1.500px solid #6a6a6a;border-top:1px solid #eee;border-left:1px solid #eee;box-sizing:border-box;width:38px;height:12px"></div>
<div class="abs" style="left:190.7px;top:178px;font-size:7px;color:#9a9a9a;white-space:nowrap">Rename</div>
<div class="abs lbl" style="left:2px;top:195.500px">Opacity</div>
<div class="abs" style="left:40.500px;top:199.500px;width:134px;height:3.500px;border-radius:2px;background:linear-gradient(#c9c9c9,#adadad)"></div>
<div class="abs" style="left:104px;top:197.500px;width:7px;height:7px;border:1px solid #d0d0d0;border-radius:1.500px;background:#fff;box-sizing:content-box"></div>
<div class="abs" style="left:180.500px;top:196.5px;font-size:7px;color:#222">50%</div>
<div class="abs lbl" style="left:2px;top:215.500px">Legend</div>
<svg class="abs" style="left:2px;top:223px" width="10" height="10" viewBox="0 0 10 10"><path d="M1.500,1.500 L6.500,8.500 M6.500,1.500 L1.500,8.500" stroke="#f03030" stroke-width=".9"/></svg>
<div class="abs" style="left:14px;top:224px;font-size:8px;color:#333">0.0</div>
<div class="abs" style="left:3px;top:233px;width:6px;height:68px;background:linear-gradient(#9cc8e8 0,#0a8484 3%,#008080 10%,#00b400 28%,#ffff00 55%,#ffa000 75%,#ff0000 96%,#ff0000 100%)"></div>
<div class="abs" style="left:14px;top:292.500px;font-size:8px;color:#333">678.6667</div>

<!-- LINKS BOX -->
<div id="links" class="abs" style="left:2.500px;top:355px;width:218px;height:51px;border-radius:4px;background:linear-gradient(#f6f6f6,#e4e4e4);box-shadow:0 1.500px 2px rgba(0,0,0,.45);border-top:1px solid #ccc;box-sizing:border-box">
<i style="top:11px"></i><i style="top:19.200px"></i><i style="top:27.400px"></i><i style="top:35.600px"></i><i style="top:43.800px"></i>
<div style="left:19.500px;top:9.500px">View area report for "My Area"</div>
<div style="left:19.500px;top:17.700px">View metadata for "Occurrence Density"</div>
<div style="left:19.500px;top:25.900px">Download species list for "My Area"</div>
<div style="left:19.500px;top:34.100px">Download all records for "My Area"</div>
<div style="left:19.500px;top:42.300px">Generate classification for "My Area"</div>
</div>
<!-- scrollbar -->
<div class="abs" style="left:209px;top:355.500px;width:9px;height:50px;background:#f0efec"></div>
<div class="abs" style="left:209px;top:355.500px;width:9px;height:9px;background:#d9d6cf;border:1px solid #fff;border-right-color:#555;border-bottom-color:#555;box-sizing:border-box"></div>
<div class="abs" style="left:209px;top:364.500px;width:9px;height:26px;background:#d9d6cf;border:1px solid #fff;border-right-color:#555;border-bottom-color:#555;box-sizing:border-box"></div>
<div class="abs" style="left:209px;top:396.500px;width:9px;height:9px;background:#d9d6cf;border:1px solid #fff;border-right-color:#555;border-bottom-color:#555;box-sizing:border-box"></div>
<svg class="abs" style="left:209px;top:355.500px" width="9" height="50" viewBox="0 0 9 50"><path d="M2.500,5.500 L4.300,3.200 L6.100,5.500 Z M2.500,44 L4.300,46.300 L6.100,44 Z" fill="#000"/></svg>
</body></html>
